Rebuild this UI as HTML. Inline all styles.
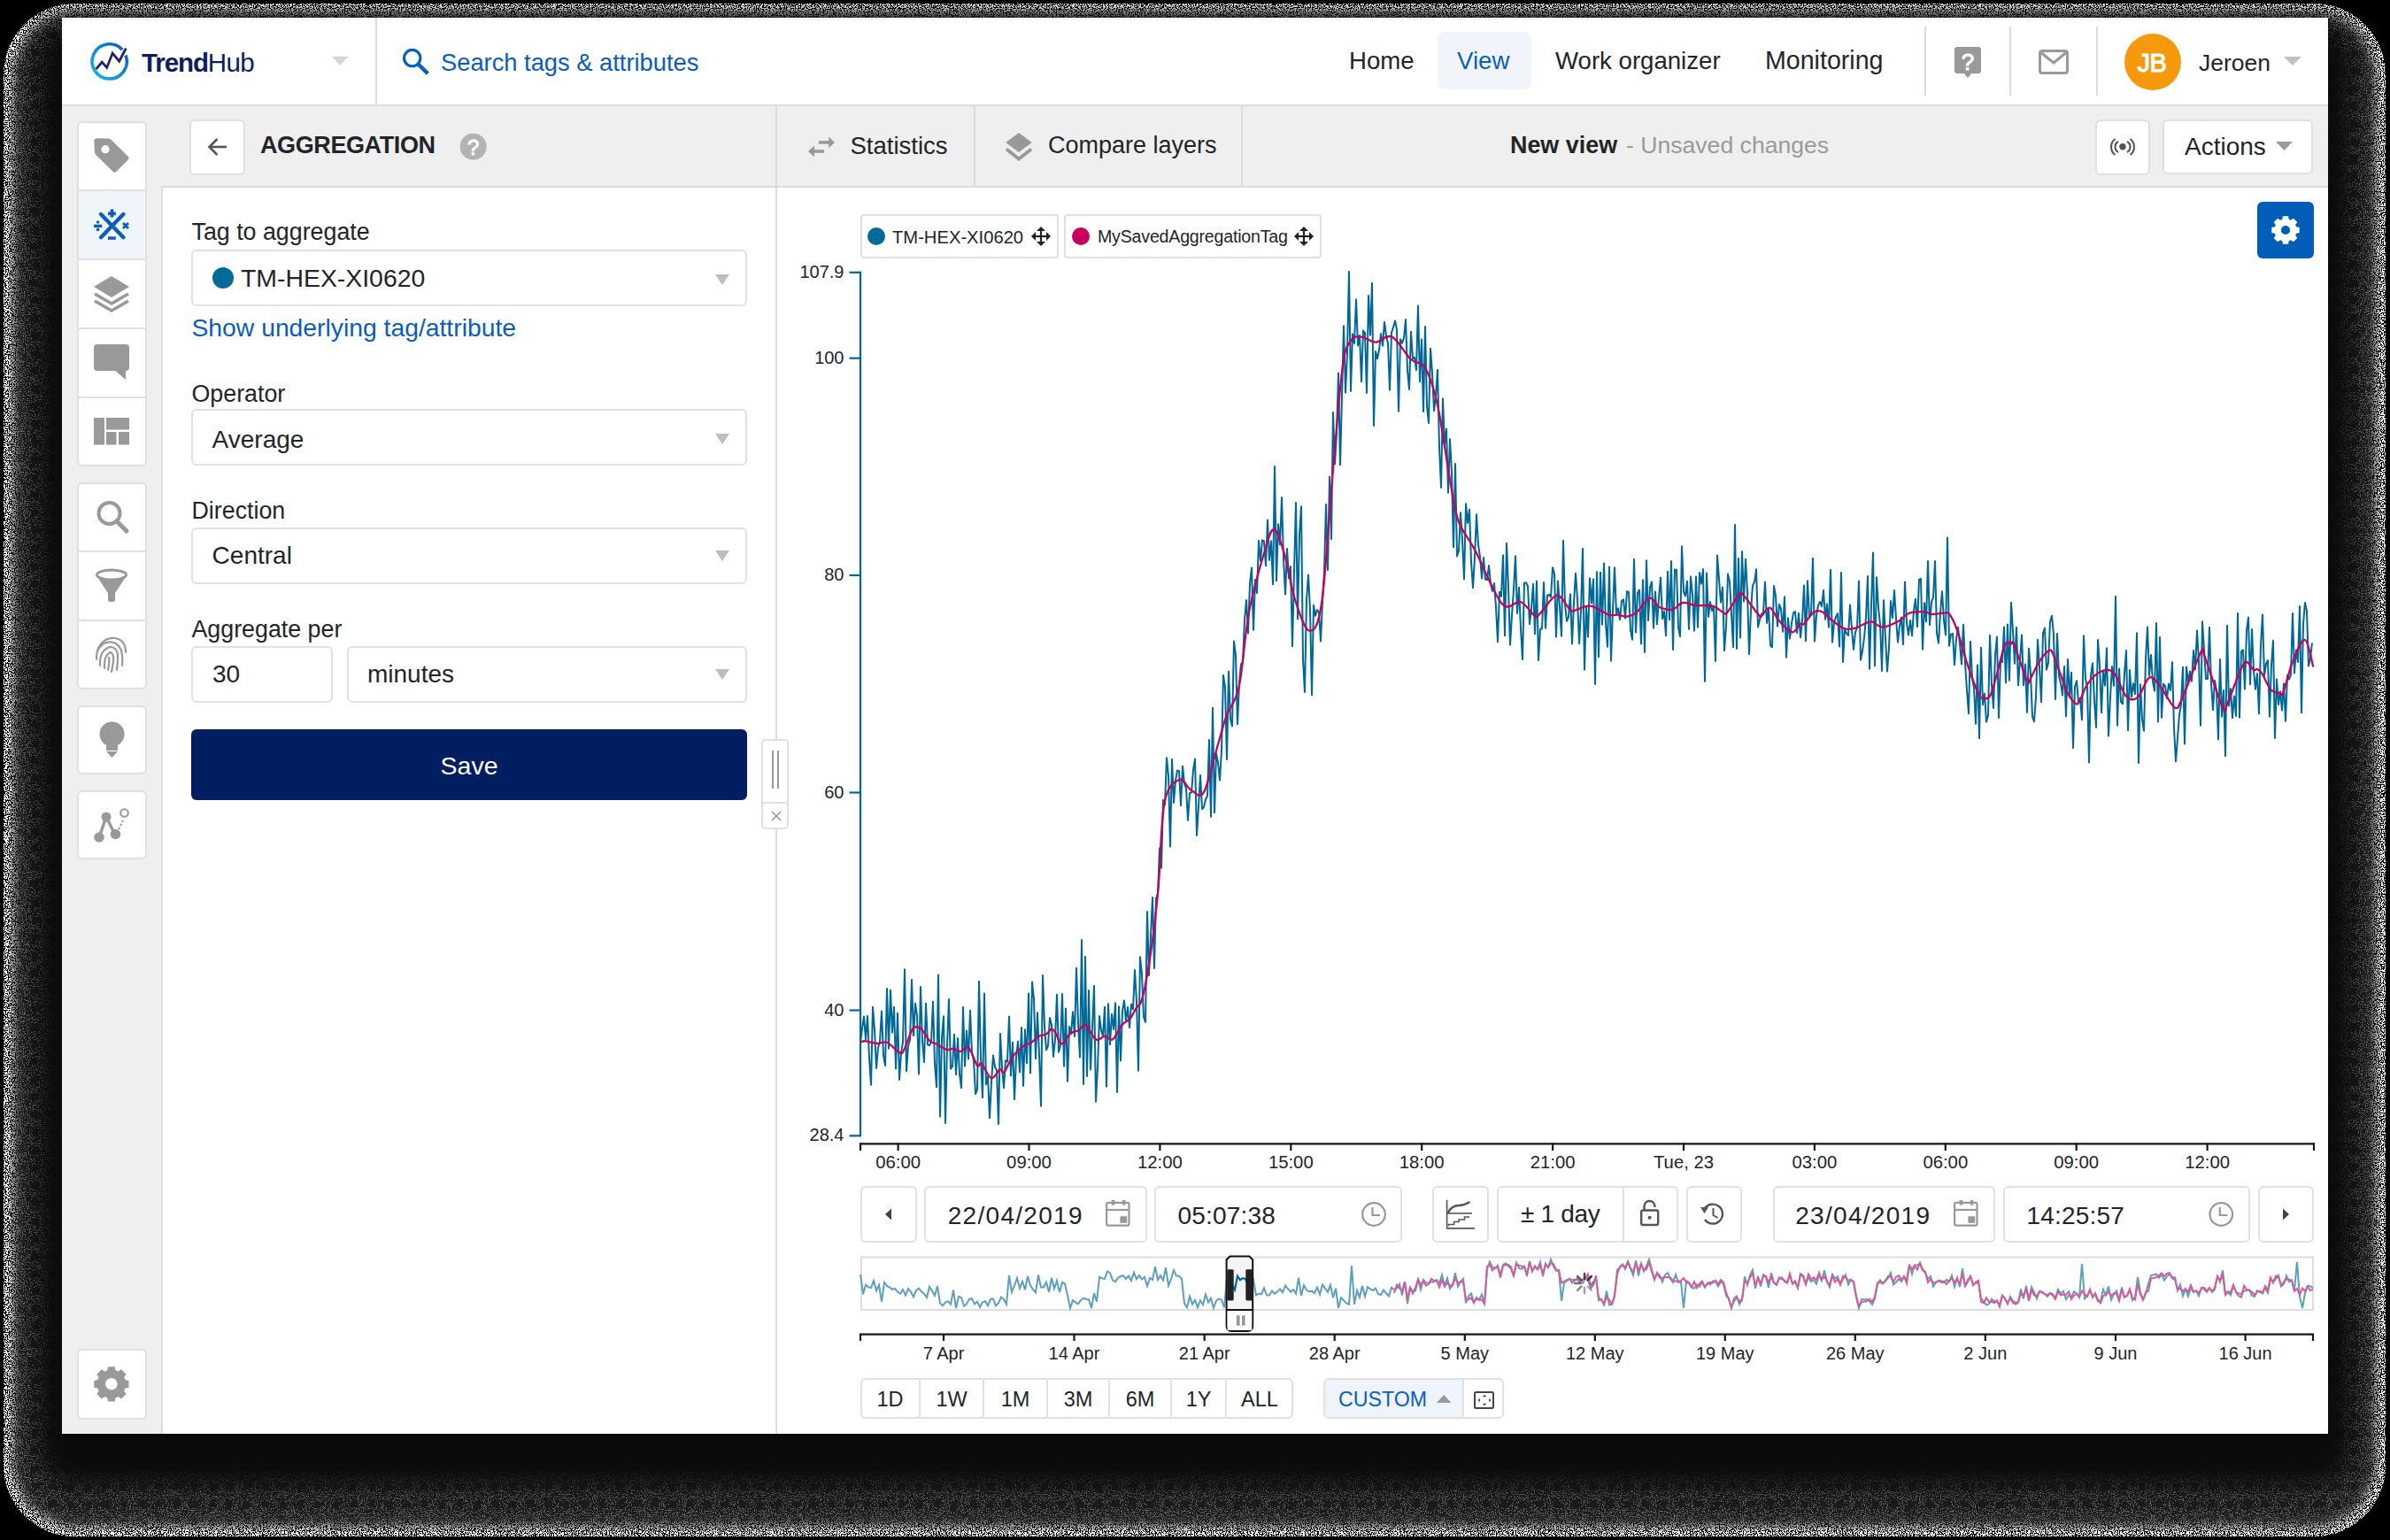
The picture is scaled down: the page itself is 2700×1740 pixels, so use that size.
<!DOCTYPE html>
<html><head><meta charset="utf-8"><title>TrendHub</title>
<style>
html,body{margin:0;padding:0;width:2700px;height:1740px;overflow:hidden;background:#000;}
body{position:relative;font-family:"Liberation Sans", sans-serif;}
div,svg{box-sizing:border-box;}
svg{overflow:visible;}
</style></head><body>
<div style="position:absolute;left:0;top:0;width:2700px;height:1740px;background:#000"></div><svg style="position:absolute;left:0;top:0" width="2700" height="1740">
<defs>
<filter id="nz" x="0" y="0" width="100%" height="100%" color-interpolation-filters="sRGB">
<feTurbulence type="fractalNoise" baseFrequency="0.75" numOctaves="1" seed="4" result="t"/>
<feColorMatrix type="matrix" values="0 0 0 0 0  0 0 0 0 0  0 0 0 0 0  1 0 0 0 0" in="t" result="a"/>
<feComponentTransfer in="a" result="b"><feFuncA type="discrete" tableValues="0 0 0 0 0 1 1 1 1 1"/></feComponentTransfer>
<feFlood flood-color="#fff" result="w"/>
<feComposite in="w" in2="b" operator="in" result="wn"/>
<feComposite in="wn" in2="SourceGraphic" operator="in"/>
</filter>
<radialGradient id="sh" cx="50%" cy="50%" r="50%"><stop offset="0" stop-color="#000"/><stop offset="1" stop-color="#000"/></radialGradient>
</defs>
<rect x="4" y="4" width="2691" height="1732" rx="80" ry="80" fill="#fff" filter="url(#nz)"/>
</svg><div style="position:absolute;left:17px;top:17px;width:2665px;height:1706px;border-radius:70px;background:#1c1c1c;filter:blur(6px)"></div><div style="position:absolute;left:40px;top:19px;width:2620px;height:1660px;border-radius:40px;background:#0b0b0b;filter:blur(14px)"></div><svg style="position:absolute;left:0;top:0" width="2700" height="1740">
<defs>
<filter id="nz2" x="0" y="0" width="100%" height="100%" color-interpolation-filters="sRGB">
<feTurbulence type="fractalNoise" baseFrequency="0.95" numOctaves="1" seed="11" result="t"/>
<feColorMatrix type="matrix" values="0 0 0 0 0  0 0 0 0 0  0 0 0 0 0  1 0 0 0 0" in="t" result="a"/>
<feComponentTransfer in="a" result="b"><feFuncA type="discrete" tableValues="0 0 0 0 0 0 1 1 1 1"/></feComponentTransfer>
<feFlood flood-color="#6a6a6a" result="w"/>
<feComposite in="w" in2="b" operator="in" result="wn"/>
<feComposite in="wn" in2="SourceGraphic" operator="in"/>
</filter>
<filter id="bl2" x="-5%" y="-5%" width="110%" height="110%"><feGaussianBlur stdDeviation="13"/></filter>
<mask id="m2" maskUnits="userSpaceOnUse" x="0" y="0" width="2700" height="1740">
<rect x="0" y="0" width="2700" height="1740" fill="black"/>
<rect x="10" y="10" width="2679" height="1720" rx="76" fill="white"/>
<rect x="44" y="30" width="2612" height="1650" rx="40" fill="black" filter="url(#bl2)"/>
</mask>
</defs>
<rect x="0" y="0" width="2700" height="1740" fill="#fff" filter="url(#nz2)" mask="url(#m2)"/>
</svg><div style="position:absolute;left:70px;top:20px;width:2560px;height:1600px;background:#fff;"></div><div style="position:absolute;left:70px;top:120px;width:113px;height:1500px;background:#efefef;"></div><div style="position:absolute;left:183px;top:120px;width:2447px;height:91px;background:#efefef;"></div><div style="position:absolute;left:70px;top:118px;width:2560px;height:2px;background:#dcdcdc;"></div><div style="position:absolute;left:183px;top:210px;width:2447px;height:2px;background:#dcdcdc;"></div><div style="position:absolute;left:182px;top:210px;width:2px;height:1410px;background:#dcdcdc;"></div><div style="position:absolute;left:876px;top:120px;width:2px;height:1500px;background:#dcdcdc;"></div><div style="position:absolute;left:424px;top:20px;width:2px;height:98px;background:#dcdcdc;"></div><svg style="position:absolute;left:95px;top:40px;" width="55" height="60" viewBox="95 40 55 60">
<defs><linearGradient id="lg" x1="0" y1="1" x2="1" y2="0"><stop offset="0" stop-color="#19b6ea"/><stop offset="1" stop-color="#0a58c0"/></linearGradient></defs>
<path d="M138.2,56.3 A19.6,19.6 0 1 0 142.0,62.5" fill="none" stroke="url(#lg)" stroke-width="3.6" stroke-linecap="butt"/>
<polyline points="108.5,78.1 115.2,70.1 120.7,76.4 127.1,60.1 134.7,69.2 142.3,54.7" fill="none" stroke="#25226a" stroke-width="2.8" stroke-linejoin="miter"/>
</svg><div style="position:absolute;left:160px;top:55.5px;font-size:29.5px;line-height:29.5px;color:#0e1d5e;font-weight:400;white-space:nowrap;"><span style="font-weight:700;letter-spacing:-1.1px">Trend</span><span style="letter-spacing:-0.6px">Hub</span></div><svg style="position:absolute;left:370px;top:60px;" width="30" height="18" viewBox="370 60 30 18"><polygon points="374.5,63.8 393.9,63.8 384.2,73.8" fill="#d6d6d6"/></svg><svg style="position:absolute;left:450px;top:50px;" width="40" height="40" viewBox="450 50 40 40"><circle cx="465.7" cy="65.6" r="9.2" fill="none" stroke="#0a5ec0" stroke-width="3.1"/><line x1="473" y1="73" x2="483.3" y2="83.1" stroke="#0a5ec0" stroke-width="4.4" stroke-linecap="butt"/></svg><div style="position:absolute;left:498px;top:57.1px;font-size:27.3px;line-height:27.3px;color:#0a5dbc;font-weight:400;white-space:nowrap;">Search tags &amp; attributes</div><div style="position:absolute;left:1624px;top:36px;width:106px;height:65px;background:#f1f5fa;border-radius:8px;"></div><div style="position:absolute;left:1524px;top:55.2px;font-size:27.6px;line-height:27.6px;color:#212529;font-weight:400;white-space:nowrap;">Home</div><div style="position:absolute;left:1646px;top:55.2px;font-size:27.6px;line-height:27.6px;color:#0a5ec0;font-weight:400;white-space:nowrap;">View</div><div style="position:absolute;left:1757px;top:55.2px;font-size:27.6px;line-height:27.6px;color:#212529;font-weight:400;white-space:nowrap;">Work organizer</div><div style="position:absolute;left:1994px;top:54.4px;font-size:28.6px;line-height:28.6px;color:#212529;font-weight:400;white-space:nowrap;">Monitoring</div><div style="position:absolute;left:2174px;top:30px;width:2px;height:78px;background:#dcdcdc;"></div><div style="position:absolute;left:2270px;top:30px;width:2px;height:78px;background:#dcdcdc;"></div><div style="position:absolute;left:2368px;top:30px;width:2px;height:78px;background:#dcdcdc;"></div><svg style="position:absolute;left:2204px;top:50px;" width="38" height="42" viewBox="2204 50 38 42"><rect x="2208" y="53" width="30" height="30" rx="3" fill="#999"/><polygon points="2218,82 2228,82 2223,88" fill="#999"/><text x="2223" y="78.5" font-family="Liberation Sans" font-weight="400" font-size="26" fill="#fff" stroke="#fff" stroke-width="0.9" text-anchor="middle">?</text></svg><svg style="position:absolute;left:2300px;top:52px;" width="41" height="36" viewBox="2300 52 41 36"><rect x="2304.5" y="57.5" width="31" height="25" rx="2.5" fill="none" stroke="#999" stroke-width="3"/><polyline points="2306,59.5 2320,71 2334,59.5" fill="none" stroke="#999" stroke-width="3"/></svg><svg style="position:absolute;left:2398px;top:36px;" width="68" height="68" viewBox="2398 36 68 68"><circle cx="2432" cy="70" r="32" fill="#f7990c"/><text x="2431" y="81" font-family="Liberation Sans" font-weight="400" font-size="29" fill="#fff" stroke="#fff" stroke-width="1.1" text-anchor="middle" letter-spacing="-0.5">JB</text></svg><div style="position:absolute;left:2484px;top:57.6px;font-size:26.5px;line-height:26.5px;color:#212529;font-weight:400;white-space:nowrap;">Jeroen</div><svg style="position:absolute;left:2576px;top:60px;" width="28" height="18" viewBox="2576 60 28 18"><polygon points="2580,64 2600,64 2590,74" fill="#c0c0c0"/></svg><div style="position:absolute;left:214px;top:135px;width:63px;height:62.5px;background:#fff;border:2px solid #e0e0e0;border-radius:6px;box-sizing:border-box;"></div><svg style="position:absolute;left:230px;top:150px;" width="32" height="32" viewBox="230 150 32 32"><line x1="237" y1="166" x2="256" y2="166" stroke="#555" stroke-width="2.6"/><polyline points="245.5,157 236.5,166 245.5,175" fill="none" stroke="#555" stroke-width="2.6"/></svg><div style="position:absolute;left:294px;top:151.1px;font-size:27px;line-height:27px;color:#212529;font-weight:700;white-space:nowrap;letter-spacing:-0.4px;">AGGREGATION</div><svg style="position:absolute;left:518px;top:149px;" width="34" height="34" viewBox="518 149 34 34"><circle cx="534.7" cy="165.7" r="15" fill="#b3b3b3"/><text x="534.7" y="174.5" font-family="Liberation Sans" font-weight="400" font-size="24" fill="#fff" stroke="#fff" stroke-width="0.9" text-anchor="middle">?</text></svg><div style="position:absolute;left:1100px;top:120px;width:2px;height:91px;background:#dcdcdc;"></div><div style="position:absolute;left:1402px;top:120px;width:2px;height:91px;background:#dcdcdc;"></div><svg style="position:absolute;left:908px;top:150px;" width="38" height="32" viewBox="908 150 38 32"><g stroke="#999" stroke-width="3.6" fill="none"><line x1="925" y1="160.9" x2="937.5" y2="160.9"/><line x1="918.5" y1="171" x2="931" y2="171"/></g><polygon points="936.2,154.6 943,160.9 936.2,167.2" fill="#999"/><polygon points="920,164.6 913,171 920,177.4" fill="#999"/></svg><div style="position:absolute;left:960.5px;top:150.7px;font-size:27.5px;line-height:27.5px;color:#212529;font-weight:400;white-space:nowrap;">Statistics</div><svg style="position:absolute;left:1132px;top:146px;" width="40" height="40" viewBox="1132 146 40 40"><polygon points="1151,150 1165.8,161 1151,172 1136.2,161" fill="#999"/><polyline points="1137,168.6 1151,179.6 1165,168.6" fill="none" stroke="#999" stroke-width="3.8"/></svg><div style="position:absolute;left:1184px;top:151.1px;font-size:27px;line-height:27px;color:#212529;font-weight:400;white-space:nowrap;">Compare layers</div><div style="position:absolute;left:1706px;top:150.7px;font-size:26.9px;line-height:26.9px;color:#212529;font-weight:700;white-space:nowrap;">New view</div><div style="position:absolute;left:1837px;top:151.0px;font-size:26.6px;line-height:26.6px;color:#9a9a9a;font-weight:400;white-space:nowrap;">- Unsaved changes</div><div style="position:absolute;left:2367px;top:134.5px;width:62px;height:63.0px;background:#fff;border:2px solid #e0e0e0;border-radius:6px;box-sizing:border-box;"></div><svg style="position:absolute;left:2380px;top:150px;" width="36" height="32" viewBox="2380 150 36 32"><circle cx="2398" cy="165.8" r="3.7" fill="#555"/><path d="M2393,160 A6.9,6.9 0 0 0 2393,172 M2403,160 A6.9,6.9 0 0 1 2403,172" fill="none" stroke="#555" stroke-width="2.1"/><path d="M2389.5,157 A11.25,11.25 0 0 0 2389.5,175 M2406.5,157 A11.25,11.25 0 0 1 2406.5,175" fill="none" stroke="#555" stroke-width="2.1"/></svg><div style="position:absolute;left:2443px;top:135px;width:170px;height:62px;background:#fff;border:2px solid #e0e0e0;border-radius:6px;box-sizing:border-box;"></div><div style="position:absolute;left:2468px;top:151.6px;font-size:28px;line-height:28px;color:#212529;font-weight:400;white-space:nowrap;">Actions</div><svg style="position:absolute;left:2568px;top:156px;" width="26" height="18" viewBox="2568 156 26 18"><polygon points="2571,160 2590,160 2580.5,170" fill="#9a9a9a"/></svg><div style="position:absolute;left:87px;top:137px;width:79px;height:390px;background:#fff;border:2px solid #e0e0e0;border-radius:6px;box-sizing:border-box;"></div><div style="position:absolute;left:88px;top:214px;width:77px;height:2px;background:#e0e0e0;"></div><div style="position:absolute;left:88px;top:292px;width:77px;height:2px;background:#e0e0e0;"></div><div style="position:absolute;left:88px;top:370px;width:77px;height:2px;background:#e0e0e0;"></div><div style="position:absolute;left:88px;top:448px;width:77px;height:2px;background:#e0e0e0;"></div><div style="position:absolute;left:89px;top:216px;width:75px;height:76px;background:#f0f5fa;"></div><svg style="position:absolute;left:100px;top:150px;" width="52" height="52" viewBox="100 150 52 52"><path d="M106.3,160 Q106.3,156.3 110,156.3 L122.5,156.6 Q124.5,156.7 126,158.2 L144.5,176.5 Q146.5,178.7 144.5,180.8 L131.5,193.8 Q129.5,195.8 127.5,193.8 L108.8,175.5 Q107,173.7 107,171.5 Z" fill="#999"/><circle cx="119" cy="168.7" r="4.6" fill="#fff"/></svg><svg style="position:absolute;left:100px;top:228px;" width="52" height="50" viewBox="100 228 52 50"><g stroke="#0a5ec0" stroke-linecap="round"><line x1="114" y1="242" x2="139.4" y2="268.2" stroke-width="4.3"/><line x1="139.4" y1="242" x2="114" y2="268.2" stroke-width="4.3"/></g><g fill="#0a5ec0"><rect x="122" y="239.5" width="8.8" height="3.7"/><rect x="124.6" y="236.4" width="3.7" height="9.2"/><rect x="122" y="267.3" width="8.8" height="3.5"/><rect x="106" y="253.7" width="9.3" height="3.4"/><circle cx="110.6" cy="251" r="1.8"/><circle cx="110.6" cy="259.4" r="1.8"/></g><g stroke="#0a5ec0" stroke-width="2.8"><line x1="139" y1="252" x2="145" y2="258"/><line x1="145" y1="252" x2="139" y2="258"/></g></svg><svg style="position:absolute;left:100px;top:305px;" width="52" height="53" viewBox="100 305 52 53"><polygon points="126,312 146,324 126,336 106,324" fill="#999"/><polyline points="107,332 126,343 145,332" fill="none" stroke="#999" stroke-width="3.5"/><polyline points="107,340 126,351 145,340" fill="none" stroke="#999" stroke-width="3.5"/></svg><svg style="position:absolute;left:100px;top:385px;" width="52" height="47" viewBox="100 385 52 47"><rect x="106" y="389" width="40" height="30" rx="4" fill="#999"/><polygon points="128,417 142,417 142,429" fill="#999"/></svg><svg style="position:absolute;left:100px;top:466px;" width="52" height="42" viewBox="100 466 52 42"><rect x="106" y="472" width="12" height="30.5" fill="#999"/><rect x="120" y="472" width="26" height="13.5" fill="#999"/><rect x="120" y="488" width="11.5" height="14.5" fill="#999"/><rect x="134" y="488" width="12" height="14.5" fill="#999"/></svg><div style="position:absolute;left:87px;top:545px;width:79px;height:234px;background:#fff;border:2px solid #e0e0e0;border-radius:6px;box-sizing:border-box;"></div><div style="position:absolute;left:88px;top:621.5px;width:77px;height:2.0px;background:#e0e0e0;"></div><div style="position:absolute;left:88px;top:700px;width:77px;height:2px;background:#e0e0e0;"></div><svg style="position:absolute;left:100px;top:555px;" width="52" height="55" viewBox="100 555 52 55"><circle cx="123.5" cy="580" r="12" fill="none" stroke="#999" stroke-width="4"/><line x1="132" y1="589" x2="143" y2="600" stroke="#999" stroke-width="5" stroke-linecap="round"/></svg><svg style="position:absolute;left:100px;top:636px;" width="52" height="54" viewBox="100 636 52 54"><ellipse cx="126" cy="649.5" rx="16.5" ry="5.5" fill="none" stroke="#999" stroke-width="3"/><path d="M109.5,650 Q111,654 122,670 L122,678 Q122,680 124,680 L128,680 Q130,680 130,678 L130,670 Q141,654 142.5,650 Q135,656 126,656 Q117,656 109.5,650 Z" fill="#999"/></svg><svg style="position:absolute;left:100px;top:712px;" width="52" height="56" viewBox="100 712 52 56"><g fill="none" stroke="#999" stroke-width="2.2" stroke-linecap="round"><path d="M110,735 Q116,720 130,721 Q142,723 142,737"/><path d="M109,745 Q108,731 120,726 Q132,723 137,735 Q139,742 138,752"/><path d="M113,752 Q112,735 124,731 Q134,731 133,745 L132,757"/><path d="M118,755 Q117,740 125,737 Q129,739 128,748 L126,759"/><path d="M122,757 Q124,748 123,743"/></g></svg><div style="position:absolute;left:87px;top:797px;width:79px;height:78px;background:#fff;border:2px solid #e0e0e0;border-radius:6px;box-sizing:border-box;"></div><svg style="position:absolute;left:100px;top:805px;" width="52" height="63" viewBox="100 805 52 63"><circle cx="126.5" cy="829.5" r="14" fill="#999"/><rect x="120" y="839" width="13" height="9" fill="#999"/><polygon points="120,849 133,849 126.5,856" fill="#999"/></svg><div style="position:absolute;left:87px;top:893px;width:79px;height:78px;background:#fff;border:2px solid #e0e0e0;border-radius:6px;box-sizing:border-box;"></div><svg style="position:absolute;left:100px;top:900px;" width="52" height="65" viewBox="100 900 52 65"><line x1="120" y1="923" x2="112" y2="946" stroke="#999" stroke-width="3.5"/><line x1="120" y1="923" x2="130" y2="943" stroke="#999" stroke-width="3.5"/><circle cx="120" cy="923" r="5.5" fill="#999"/><circle cx="112" cy="946" r="5.8" fill="#999"/><circle cx="130.5" cy="942.5" r="5.8" fill="#999"/><line x1="134" y1="937" x2="139" y2="927" stroke="#999" stroke-width="2" stroke-dasharray="2.5,2"/><circle cx="140.5" cy="918.5" r="4.3" fill="none" stroke="#999" stroke-width="2"/></svg><div style="position:absolute;left:87px;top:1524px;width:79px;height:80px;background:#fff;border:2px solid #e0e0e0;border-radius:6px;box-sizing:border-box;"></div><svg style="position:absolute;left:100px;top:1538px;" width="52" height="52" viewBox="100 1538 52 52"><path fill="#999" d="M121.22,1548.29 L122.02,1544.18 L129.78,1544.18 L130.58,1548.29 L131.35,1548.54 L132.10,1548.83 L132.84,1549.16 L133.56,1549.52 L137.03,1547.19 L142.51,1552.67 L140.18,1556.14 L140.54,1556.86 L140.87,1557.60 L141.16,1558.35 L141.41,1559.12 L145.52,1559.92 L145.52,1567.68 L141.41,1568.48 L141.16,1569.25 L140.87,1570.00 L140.54,1570.74 L140.18,1571.46 L142.51,1574.93 L137.03,1580.41 L133.56,1578.08 L132.84,1578.44 L132.10,1578.77 L131.35,1579.06 L130.58,1579.31 L129.78,1583.42 L122.02,1583.42 L121.22,1579.31 L120.45,1579.06 L119.70,1578.77 L118.96,1578.44 L118.24,1578.08 L114.77,1580.41 L109.29,1574.93 L111.62,1571.46 L111.26,1570.74 L110.93,1570.00 L110.64,1569.25 L110.39,1568.48 L106.28,1567.68 L106.28,1559.92 L110.39,1559.12 L110.64,1558.35 L110.93,1557.60 L111.26,1556.86 L111.62,1556.14 L109.29,1552.67 L114.77,1547.19 L118.24,1549.52 L118.96,1549.16 L119.70,1548.83 L120.45,1548.54 Z"/><circle cx="125.9" cy="1563.8" r="6.8" fill="#fff"/></svg><div style="position:absolute;left:216.5px;top:249.3px;font-size:26.8px;line-height:26.8px;color:#212529;font-weight:400;white-space:nowrap;">Tag to aggregate</div><div style="position:absolute;left:216px;top:282px;width:628px;height:64px;background:#fff;border:2px solid #e0e0e0;border-radius:6px;box-sizing:border-box;"></div><svg style="position:absolute;left:238px;top:300px;" width="28" height="28" viewBox="238 300 28 28"><circle cx="252" cy="314" r="12" fill="#006a98"/></svg><div style="position:absolute;left:272px;top:299.8px;font-size:28.4px;line-height:28.4px;color:#212529;font-weight:400;white-space:nowrap;">TM-HEX-XI0620</div><svg style="position:absolute;left:806px;top:308px;" width="20" height="16" viewBox="806 308 20 16"><polygon points="808,310 824,310 816,322" fill="#bdbdbd"/></svg><div style="position:absolute;left:216.5px;top:355.5px;font-size:28.3px;line-height:28.3px;color:#0a5dbc;font-weight:400;white-space:nowrap;">Show underlying tag/attribute</div><div style="position:absolute;left:216.5px;top:432.1px;font-size:26.8px;line-height:26.8px;color:#212529;font-weight:400;white-space:nowrap;">Operator</div><div style="position:absolute;left:216px;top:462px;width:628px;height:64px;background:#fff;border:2px solid #e0e0e0;border-radius:6px;box-sizing:border-box;"></div><div style="position:absolute;left:239.6px;top:482.8px;font-size:28px;line-height:28px;color:#212529;font-weight:400;white-space:nowrap;">Average</div><svg style="position:absolute;left:806px;top:488px;" width="20" height="16" viewBox="806 488 20 16"><polygon points="808,490 824,490 816,502" fill="#bdbdbd"/></svg><div style="position:absolute;left:216.5px;top:564.1px;font-size:26.8px;line-height:26.8px;color:#212529;font-weight:400;white-space:nowrap;">Direction</div><div style="position:absolute;left:216px;top:596px;width:628px;height:64px;background:#fff;border:2px solid #e0e0e0;border-radius:6px;box-sizing:border-box;"></div><div style="position:absolute;left:239.6px;top:614.3px;font-size:28px;line-height:28px;color:#212529;font-weight:400;white-space:nowrap;">Central</div><svg style="position:absolute;left:806px;top:620px;" width="20" height="16" viewBox="806 620 20 16"><polygon points="808,622 824,622 816,634" fill="#bdbdbd"/></svg><div style="position:absolute;left:216.5px;top:698.1px;font-size:26.8px;line-height:26.8px;color:#212529;font-weight:400;white-space:nowrap;">Aggregate per</div><div style="position:absolute;left:216px;top:730px;width:160px;height:64px;background:#fff;border:2px solid #e0e0e0;border-radius:6px;box-sizing:border-box;"></div><div style="position:absolute;left:240px;top:748.3px;font-size:28px;line-height:28px;color:#212529;font-weight:400;white-space:nowrap;">30</div><div style="position:absolute;left:392px;top:730px;width:452px;height:64px;background:#fff;border:2px solid #e0e0e0;border-radius:6px;box-sizing:border-box;"></div><div style="position:absolute;left:415px;top:748.3px;font-size:28px;line-height:28px;color:#212529;font-weight:400;white-space:nowrap;">minutes</div><svg style="position:absolute;left:806px;top:754px;" width="20" height="16" viewBox="806 754 20 16"><polygon points="808,756 824,756 816,768" fill="#bdbdbd"/></svg><div style="position:absolute;left:216px;top:823.5px;width:628px;height:80.5px;background:#001e60;border-radius:6px;"></div><div style="position:absolute;left:30px;width:1000px;text-align:center;top:850.9px;font-size:28.5px;line-height:28.5px;color:#fff;font-weight:400;white-space:nowrap;">Save</div><div style="position:absolute;left:860px;top:835px;width:31px;height:102px;background:#fff;border:2px solid #e0e0e0;border-radius:5px;box-sizing:border-box;"></div><div style="position:absolute;left:861px;top:906px;width:29px;height:2px;background:#e0e0e0;"></div><div style="position:absolute;left:872px;top:848px;width:2px;height:43px;background:#999;"></div><div style="position:absolute;left:878px;top:848px;width:2px;height:43px;background:#999;"></div><svg style="position:absolute;left:869px;top:914px;" width="16" height="16" viewBox="869 914 16 16"><g stroke="#999" stroke-width="1.6"><line x1="872" y1="917" x2="882" y2="927"/><line x1="882" y1="917" x2="872" y2="927"/></g></svg><div style="position:absolute;left:2550px;top:228px;width:64px;height:64px;background:#005db8;border-radius:6px;"></div><svg style="position:absolute;left:2560px;top:238px;" width="44" height="44" viewBox="2560 238 44 44"><path fill="#fff" d="M2578.26,247.97 L2578.92,244.30 L2585.08,244.30 L2585.74,247.97 L2586.29,248.15 L2586.82,248.36 L2587.35,248.59 L2587.86,248.85 L2590.92,246.72 L2595.28,251.08 L2593.15,254.14 L2593.41,254.65 L2593.64,255.18 L2593.85,255.71 L2594.03,256.26 L2597.70,256.92 L2597.70,263.08 L2594.03,263.74 L2593.85,264.29 L2593.64,264.82 L2593.41,265.35 L2593.15,265.86 L2595.28,268.92 L2590.92,273.28 L2587.86,271.15 L2587.35,271.41 L2586.82,271.64 L2586.29,271.85 L2585.74,272.03 L2585.08,275.70 L2578.92,275.70 L2578.26,272.03 L2577.71,271.85 L2577.18,271.64 L2576.65,271.41 L2576.14,271.15 L2573.08,273.28 L2568.72,268.92 L2570.85,265.86 L2570.59,265.35 L2570.36,264.82 L2570.15,264.29 L2569.97,263.74 L2566.30,263.08 L2566.30,256.92 L2569.97,256.26 L2570.15,255.71 L2570.36,255.18 L2570.59,254.65 L2570.85,254.14 L2568.72,251.08 L2573.08,246.72 L2576.14,248.85 L2576.65,248.59 L2577.18,248.36 L2577.71,248.15 Z"/><circle cx="2582" cy="260" r="5.1" fill="#005db8"/></svg><div style="position:absolute;left:972px;top:242px;width:224px;height:50px;background:#fff;border:2px solid #e0e0e0;border-radius:4px;box-sizing:border-box;"></div><svg style="position:absolute;left:976px;top:253px;" width="28" height="28" viewBox="976 253 28 28"><circle cx="990" cy="267" r="10" fill="#006a98"/></svg><div style="position:absolute;left:1008px;top:257.5px;font-size:20.2px;line-height:20.2px;color:#212529;font-weight:400;white-space:nowrap;">TM-HEX-XI0620</div><svg style="position:absolute;left:1162px;top:253px;" width="28" height="28" viewBox="1162 253 28 28"><g stroke="#222" stroke-width="2.2"><line x1="1167" y1="267" x2="1185" y2="267"/><line x1="1176" y1="258" x2="1176" y2="276"/></g><g fill="#222"><polygon points="1165,267 1170,262 1170,272"/><polygon points="1187,267 1182,262 1182,272"/><polygon points="1176,256 1171,261 1181,261"/><polygon points="1176,278 1171,273 1181,273"/></g></svg><div style="position:absolute;left:1202px;top:242px;width:291px;height:50px;background:#fff;border:2px solid #e0e0e0;border-radius:4px;box-sizing:border-box;"></div><svg style="position:absolute;left:1207px;top:253px;" width="28" height="28" viewBox="1207 253 28 28"><circle cx="1221" cy="267" r="10" fill="#c7005e"/></svg><div style="position:absolute;left:1240px;top:258.0px;font-size:19.6px;line-height:19.6px;color:#212529;font-weight:400;white-space:nowrap;letter-spacing:-0.2px;">MySavedAggregationTag</div><svg style="position:absolute;left:1459px;top:253px;" width="28" height="28" viewBox="1459 253 28 28"><g stroke="#222" stroke-width="2.2"><line x1="1464" y1="267" x2="1482" y2="267"/><line x1="1473" y1="258" x2="1473" y2="276"/></g><g fill="#222"><polygon points="1462,267 1467,262 1467,272"/><polygon points="1484,267 1479,262 1479,272"/><polygon points="1473,256 1468,261 1478,261"/><polygon points="1473,278 1468,273 1478,273"/></g></svg><svg style="position:absolute;left:877px;top:212px;" width="1753" height="1118" viewBox="877 212 1753 1118"><g fill="none" stroke-linejoin="round"><path d="M972.0,1177.3 974.0,1162.0 976.0,1148.5 978.0,1174.4 980.0,1147.9 982.0,1195.8 984.0,1225.8 986.0,1137.8 988.0,1163.8 990.0,1207.0 992.0,1183.9 994.0,1176.6 996.0,1142.5 998.0,1192.5 1000.0,1203.9 1002.0,1116.9 1004.0,1184.7 1006.0,1118.8 1008.0,1166.6 1010.0,1137.9 1012.0,1207.5 1014.0,1144.8 1016.0,1219.9 1018.0,1189.6 1020.0,1177.5 1022.0,1095.3 1024.0,1210.2 1026.0,1181.9 1028.0,1174.9 1030.0,1107.1 1032.0,1170.1 1034.0,1133.7 1036.0,1147.5 1038.0,1213.5 1040.0,1115.1 1042.0,1176.3 1044.0,1199.9 1046.0,1133.8 1048.0,1180.4 1050.0,1181.3 1052.0,1177.4 1054.0,1131.8 1056.0,1201.7 1058.0,1228.2 1060.0,1101.5 1062.0,1261.6 1064.0,1173.0 1066.0,1148.2 1068.0,1268.9 1070.0,1180.9 1072.0,1129.1 1074.0,1207.8 1076.0,1204.8 1078.0,1168.7 1080.0,1214.1 1082.0,1173.1 1084.0,1213.3 1086.0,1229.2 1088.0,1138.1 1090.0,1204.4 1092.0,1164.6 1094.0,1196.5 1096.0,1141.7 1098.0,1189.8 1100.0,1198.0 1102.0,1236.0 1104.0,1231.2 1106.0,1108.7 1108.0,1194.9 1110.0,1240.1 1112.0,1122.5 1114.0,1225.2 1116.0,1216.5 1118.0,1263.2 1120.0,1222.5 1122.0,1192.6 1124.0,1205.9 1126.0,1208.9 1128.0,1270.0 1130.0,1168.0 1132.0,1205.9 1134.0,1229.1 1136.0,1198.2 1138.0,1199.6 1140.0,1148.6 1142.0,1215.5 1144.0,1177.8 1146.0,1242.1 1148.0,1194.9 1150.0,1176.6 1152.0,1211.4 1154.0,1161.1 1156.0,1226.9 1158.0,1163.3 1160.0,1201.3 1162.0,1122.4 1164.0,1212.6 1166.0,1109.4 1168.0,1128.7 1170.0,1196.3 1172.0,1144.3 1174.0,1191.6 1176.0,1249.7 1178.0,1102.0 1180.0,1159.9 1182.0,1186.3 1184.0,1181.3 1186.0,1150.0 1188.0,1158.1 1190.0,1193.9 1192.0,1174.3 1194.0,1123.7 1196.0,1188.7 1198.0,1180.9 1200.0,1123.1 1202.0,1204.7 1204.0,1139.6 1206.0,1221.7 1208.0,1160.1 1210.0,1167.9 1212.0,1143.3 1214.0,1170.9 1216.0,1093.7 1218.0,1156.1 1220.0,1194.6 1222.0,1062.0 1224.0,1225.0 1226.0,1081.1 1228.0,1216.0 1230.0,1119.1 1232.0,1208.4 1234.0,1161.0 1236.0,1113.8 1238.0,1244.8 1240.0,1206.3 1242.0,1147.9 1244.0,1164.1 1246.0,1170.6 1248.0,1137.8 1250.0,1227.8 1252.0,1134.2 1254.0,1180.2 1256.0,1145.7 1258.0,1163.0 1260.0,1133.3 1262.0,1233.9 1264.0,1137.2 1266.0,1198.5 1268.0,1142.2 1270.0,1130.4 1272.0,1154.0 1274.0,1137.9 1276.0,1161.0 1278.0,1134.7 1280.0,1140.3 1282.0,1096.1 1284.0,1131.7 1286.0,1209.8 1288.0,1081.3 1290.0,1100.9 1292.0,1148.9 1294.0,1154.9 1296.0,1029.9 1298.0,1102.0 1300.0,1057.1 1302.0,1014.1 1304.0,1093.9 1306.0,1015.1 1308.0,1010.1 1310.0,958.3 1312.0,980.7 1314.0,903.9 1316.0,909.1 1318.0,856.2 1320.0,876.8 1322.0,956.6 1324.0,858.1 1326.0,906.9 1328.0,882.0 1330.0,870.5 1332.0,871.1 1334.0,910.1 1336.0,865.8 1338.0,885.6 1340.0,890.7 1342.0,926.8 1344.0,896.1 1346.0,895.4 1348.0,869.8 1350.0,857.6 1352.0,944.0 1354.0,911.3 1356.0,876.1 1358.0,914.0 1360.0,912.1 1362.0,903.5 1364.0,899.0 1366.0,835.9 1368.0,922.8 1370.0,799.8 1372.0,918.0 1374.0,851.1 1376.0,861.8 1378.0,881.6 1380.0,847.8 1382.0,762.9 1384.0,776.5 1386.0,857.9 1388.0,758.8 1390.0,812.5 1392.0,820.6 1394.0,724.5 1396.0,740.7 1398.0,818.3 1400.0,771.3 1402.0,750.2 1404.0,748.5 1406.0,700.9 1408.0,678.0 1410.0,715.5 1412.0,659.1 1414.0,641.4 1416.0,711.7 1418.0,654.9 1420.0,670.1 1422.0,611.0 1424.0,633.7 1426.0,610.3 1428.0,611.3 1430.0,639.3 1432.0,587.6 1434.0,633.0 1436.0,611.2 1438.0,660.2 1440.0,526.9 1442.0,656.2 1444.0,592.2 1446.0,615.3 1448.0,561.9 1450.0,631.6 1452.0,671.5 1454.0,620.0 1456.0,653.1 1458.0,640.0 1460.0,730.3 1462.0,645.7 1464.0,568.0 1466.0,699.4 1468.0,604.0 1470.0,572.2 1472.0,744.9 1474.0,781.9 1476.0,677.8 1478.0,649.5 1480.0,689.3 1482.0,785.3 1484.0,683.8 1486.0,695.7 1488.0,689.1 1490.0,691.7 1492.0,724.4 1494.0,680.0 1496.0,645.4 1498.0,569.9 1500.0,644.1 1502.0,538.5 1504.0,609.1 1506.0,465.9 1508.0,524.3 1510.0,489.3 1512.0,421.5 1514.0,525.2 1516.0,447.3 1518.0,368.2 1520.0,443.6 1522.0,399.3 1524.0,307.0 1526.0,441.9 1528.0,377.3 1530.0,387.9 1532.0,338.3 1534.0,390.5 1536.0,378.9 1538.0,431.3 1540.0,373.5 1542.0,376.0 1544.0,444.0 1546.0,334.1 1548.0,378.8 1550.0,319.7 1552.0,481.0 1554.0,396.9 1556.0,405.2 1558.0,395.5 1560.0,377.1 1562.0,390.6 1564.0,363.9 1566.0,379.2 1568.0,387.9 1570.0,440.8 1572.0,375.9 1574.0,369.9 1576.0,362.5 1578.0,372.1 1580.0,464.7 1582.0,383.2 1584.0,387.8 1586.0,381.6 1588.0,361.0 1590.0,418.7 1592.0,439.9 1594.0,374.8 1596.0,405.3 1598.0,403.8 1600.0,418.0 1602.0,345.4 1604.0,431.2 1606.0,383.4 1608.0,465.0 1610.0,369.0 1612.0,458.4 1614.0,478.0 1616.0,393.8 1618.0,421.3 1620.0,464.1 1622.0,448.2 1624.0,418.1 1626.0,505.5 1628.0,551.0 1630.0,450.5 1632.0,502.7 1634.0,484.5 1636.0,556.8 1638.0,496.2 1640.0,534.3 1642.0,618.2 1644.0,523.9 1646.0,628.4 1648.0,622.5 1650.0,579.3 1652.0,610.3 1654.0,654.2 1656.0,569.2 1658.0,590.9 1660.0,575.8 1662.0,634.7 1664.0,664.1 1666.0,630.4 1668.0,581.2 1670.0,615.2 1672.0,629.1 1674.0,653.5 1676.0,630.1 1678.0,654.6 1680.0,655.2 1682.0,639.0 1684.0,659.8 1686.0,667.9 1688.0,659.1 1690.0,685.9 1692.0,725.1 1694.0,668.7 1696.0,673.9 1698.0,627.3 1700.0,718.3 1702.0,613.8 1704.0,664.3 1706.0,728.6 1708.0,695.3 1710.0,665.8 1712.0,628.2 1714.0,693.0 1716.0,663.8 1718.0,710.3 1720.0,745.1 1722.0,658.7 1724.0,658.2 1726.0,662.0 1728.0,705.1 1730.0,687.2 1732.0,659.9 1734.0,716.2 1736.0,656.6 1738.0,746.0 1740.0,710.9 1742.0,710.2 1744.0,658.0 1746.0,709.7 1748.0,672.8 1750.0,671.7 1752.0,674.8 1754.0,641.3 1756.0,648.3 1758.0,719.6 1760.0,656.5 1762.0,685.9 1764.0,718.8 1766.0,610.9 1768.0,682.6 1770.0,701.8 1772.0,697.1 1774.0,671.2 1776.0,727.5 1778.0,681.6 1780.0,647.7 1782.0,676.6 1784.0,727.3 1786.0,690.9 1788.0,619.9 1790.0,756.7 1792.0,685.6 1794.0,719.6 1796.0,653.2 1798.0,681.4 1800.0,654.6 1802.0,773.1 1804.0,646.2 1806.0,742.3 1808.0,646.7 1810.0,705.6 1812.0,636.4 1814.0,704.7 1816.0,730.8 1818.0,640.6 1820.0,746.8 1822.0,690.0 1824.0,641.2 1826.0,693.6 1828.0,687.2 1830.0,700.1 1832.0,679.1 1834.0,677.3 1836.0,698.6 1838.0,668.0 1840.0,669.2 1842.0,711.7 1844.0,722.8 1846.0,631.7 1848.0,714.4 1850.0,669.9 1852.0,666.6 1854.0,727.5 1856.0,655.2 1858.0,737.0 1860.0,633.2 1862.0,700.9 1864.0,663.6 1866.0,657.4 1868.0,709.7 1870.0,668.6 1872.0,705.3 1874.0,675.5 1876.0,652.4 1878.0,699.3 1880.0,690.8 1882.0,718.1 1884.0,645.7 1886.0,700.2 1888.0,634.1 1890.0,733.9 1892.0,643.6 1894.0,643.9 1896.0,708.6 1898.0,719.2 1900.0,617.2 1902.0,668.4 1904.0,673.5 1906.0,656.7 1908.0,710.7 1910.0,651.6 1912.0,671.8 1914.0,712.6 1916.0,651.5 1918.0,708.7 1920.0,646.9 1922.0,659.5 1924.0,643.1 1926.0,770.0 1928.0,647.5 1930.0,696.8 1932.0,680.0 1934.0,690.1 1936.0,684.8 1938.0,746.9 1940.0,627.4 1942.0,654.4 1944.0,680.5 1946.0,663.6 1948.0,735.2 1950.0,707.5 1952.0,648.5 1954.0,657.4 1956.0,693.5 1958.0,731.3 1960.0,592.9 1962.0,733.0 1964.0,630.9 1966.0,720.4 1968.0,623.1 1970.0,679.4 1972.0,631.7 1974.0,668.7 1976.0,739.0 1978.0,689.7 1980.0,661.4 1982.0,657.8 1984.0,643.3 1986.0,708.5 1988.0,700.0 1990.0,693.8 1992.0,692.2 1994.0,657.6 1996.0,704.0 1998.0,687.8 2000.0,729.2 2002.0,731.3 2004.0,661.9 2006.0,673.4 2008.0,707.6 2010.0,682.9 2012.0,688.2 2014.0,713.7 2016.0,674.3 2018.0,742.8 2020.0,698.3 2022.0,721.5 2024.0,704.4 2026.0,692.3 2028.0,691.1 2030.0,715.0 2032.0,692.9 2034.0,720.3 2036.0,701.5 2038.0,661.6 2040.0,724.2 2042.0,656.3 2044.0,697.3 2046.0,694.6 2048.0,630.8 2050.0,724.5 2052.0,695.1 2054.0,684.2 2056.0,679.9 2058.0,685.2 2060.0,666.9 2062.0,699.8 2064.0,682.4 2066.0,708.7 2068.0,643.8 2070.0,725.6 2072.0,703.4 2074.0,697.1 2076.0,693.1 2078.0,730.4 2080.0,646.9 2082.0,747.9 2084.0,711.1 2086.0,715.5 2088.0,718.0 2090.0,683.5 2092.0,710.9 2094.0,733.8 2096.0,714.1 2098.0,709.1 2100.0,656.5 2102.0,745.8 2104.0,735.6 2106.0,720.7 2108.0,697.6 2110.0,650.9 2112.0,755.7 2114.0,684.3 2116.0,624.5 2118.0,752.5 2120.0,652.2 2122.0,686.3 2124.0,705.5 2126.0,757.9 2128.0,678.2 2130.0,721.5 2132.0,758.6 2134.0,731.7 2136.0,679.0 2138.0,698.2 2140.0,666.9 2142.0,698.8 2144.0,725.6 2146.0,707.7 2148.0,697.5 2150.0,728.2 2152.0,657.5 2154.0,704.1 2156.0,717.4 2158.0,701.0 2160.0,718.4 2162.0,689.8 2164.0,676.7 2166.0,708.1 2168.0,654.8 2170.0,653.9 2172.0,733.6 2174.0,681.3 2176.0,702.3 2178.0,634.0 2180.0,706.1 2182.0,680.1 2184.0,674.8 2186.0,634.0 2188.0,715.0 2190.0,726.6 2192.0,692.3 2194.0,668.2 2196.0,700.7 2198.0,717.4 2200.0,607.6 2202.0,729.8 2204.0,716.8 2206.0,715.8 2208.0,751.1 2210.0,722.0 2212.0,708.8 2214.0,727.4 2216.0,750.4 2218.0,705.7 2220.0,749.0 2222.0,779.8 2224.0,806.2 2226.0,724.8 2228.0,765.8 2230.0,777.8 2232.0,817.7 2234.0,751.4 2236.0,834.3 2238.0,731.8 2240.0,796.3 2242.0,783.7 2244.0,815.7 2246.0,808.3 2248.0,717.7 2250.0,774.0 2252.0,799.9 2254.0,740.5 2256.0,719.4 2258.0,811.1 2260.0,747.1 2262.0,748.1 2264.0,708.6 2266.0,771.5 2268.0,705.6 2270.0,768.7 2272.0,680.7 2274.0,713.4 2276.0,749.7 2278.0,709.0 2280.0,774.3 2282.0,745.2 2284.0,717.5 2286.0,774.2 2288.0,750.6 2290.0,805.0 2292.0,732.7 2294.0,761.2 2296.0,809.7 2298.0,815.3 2300.0,787.9 2302.0,722.8 2304.0,754.1 2306.0,793.3 2308.0,715.6 2310.0,709.6 2312.0,756.6 2314.0,749.0 2316.0,702.5 2318.0,695.8 2320.0,717.2 2322.0,789.9 2324.0,716.1 2326.0,763.7 2328.0,771.7 2330.0,785.5 2332.0,752.9 2334.0,809.3 2336.0,745.1 2338.0,786.8 2340.0,759.7 2342.0,844.9 2344.0,776.0 2346.0,769.2 2348.0,792.5 2350.0,788.7 2352.0,813.3 2354.0,718.2 2356.0,767.1 2358.0,776.4 2360.0,861.4 2362.0,763.2 2364.0,749.3 2366.0,791.1 2368.0,821.9 2370.0,723.0 2372.0,751.2 2374.0,805.2 2376.0,757.5 2378.0,774.4 2380.0,732.3 2382.0,831.7 2384.0,788.0 2386.0,753.1 2388.0,774.8 2390.0,673.9 2392.0,819.8 2394.0,755.5 2396.0,792.8 2398.0,795.4 2400.0,761.1 2402.0,735.1 2404.0,825.3 2406.0,757.1 2408.0,787.6 2410.0,772.2 2412.0,784.2 2414.0,715.3 2416.0,862.0 2418.0,773.2 2420.0,813.0 2422.0,825.7 2424.0,743.7 2426.0,708.6 2428.0,763.1 2430.0,739.9 2432.0,770.0 2434.0,780.6 2436.0,703.9 2438.0,815.5 2440.0,719.9 2442.0,810.7 2444.0,772.7 2446.0,774.9 2448.0,789.0 2450.0,772.6 2452.0,780.1 2454.0,748.3 2456.0,822.7 2458.0,860.3 2460.0,834.1 2462.0,807.5 2464.0,795.8 2466.0,753.7 2468.0,840.5 2470.0,753.5 2472.0,770.7 2474.0,758.5 2476.0,769.8 2478.0,735.1 2480.0,756.3 2482.0,712.5 2484.0,746.5 2486.0,819.7 2488.0,702.3 2490.0,734.4 2492.0,766.9 2494.0,766.9 2496.0,708.9 2498.0,772.4 2500.0,802.1 2502.0,769.1 2504.0,779.6 2506.0,835.5 2508.0,744.9 2510.0,809.6 2512.0,779.9 2514.0,854.3 2516.0,706.8 2518.0,797.6 2520.0,778.2 2522.0,811.2 2524.0,786.5 2526.0,809.0 2528.0,692.9 2530.0,810.7 2532.0,735.9 2534.0,734.3 2536.0,778.6 2538.0,712.8 2540.0,697.4 2542.0,773.3 2544.0,711.1 2546.0,757.8 2548.0,778.7 2550.0,761.0 2552.0,806.4 2554.0,729.1 2556.0,694.4 2558.0,763.5 2560.0,750.0 2562.0,746.1 2564.0,809.6 2566.0,751.3 2568.0,723.7 2570.0,834.0 2572.0,767.4 2574.0,796.0 2576.0,781.2 2578.0,802.6 2580.0,772.2 2582.0,814.7 2584.0,763.0 2586.0,767.7 2588.0,762.3 2590.0,693.0 2592.0,760.5 2594.0,734.3 2596.0,747.9 2598.0,684.9 2600.0,805.2 2602.0,705.4 2604.0,680.9 2606.0,690.6 2608.0,752.4 2610.0,743.9 2612.0,726.5" stroke="#006896" stroke-width="2"/><path d="M972.7,1177.3 C973.5,1177.1 974.5,1176.0 977.5,1176.3 C980.5,1176.6 986.9,1178.8 991.0,1179.0 C995.1,1179.2 997.8,1176.0 1002.0,1177.7 C1006.2,1179.4 1013.3,1188.0 1016.5,1189.4 C1019.7,1190.8 1019.0,1190.5 1021.4,1186.0 C1023.8,1181.5 1028.4,1166.9 1031.0,1162.7 C1033.6,1158.5 1035.3,1160.7 1037.0,1160.7 C1038.7,1160.7 1038.7,1160.1 1041.0,1162.7 C1043.3,1165.3 1047.9,1173.5 1050.6,1176.3 C1053.3,1179.1 1054.2,1177.7 1057.4,1179.3 C1060.6,1180.9 1066.7,1185.1 1070.0,1186.0 C1073.3,1186.9 1074.5,1184.4 1077.0,1184.7 C1079.5,1185.0 1081.8,1188.1 1084.7,1188.0 C1087.6,1187.9 1091.2,1181.3 1094.4,1184.0 C1097.6,1186.7 1101.6,1201.0 1104.0,1204.0 C1106.4,1207.0 1106.4,1199.3 1109.0,1201.7 C1111.6,1204.1 1116.4,1217.1 1119.8,1218.2 C1123.2,1219.3 1127.1,1209.6 1129.5,1208.5 C1131.9,1207.4 1132.0,1213.8 1134.4,1211.4 C1136.8,1209.0 1140.0,1199.1 1144.0,1193.9 C1148.0,1188.7 1155.4,1182.7 1158.7,1180.2 C1162.0,1177.7 1161.0,1180.5 1163.6,1178.9 C1166.2,1177.3 1171.2,1172.2 1174.3,1170.5 C1177.4,1168.8 1179.7,1169.8 1182.0,1168.5 C1184.3,1167.2 1186.2,1162.9 1188.0,1162.7 C1189.8,1162.5 1191.2,1165.0 1192.8,1167.6 C1194.4,1170.2 1196.1,1176.6 1197.7,1178.3 C1199.3,1180.0 1201.0,1179.2 1202.6,1177.7 C1204.2,1176.2 1205.6,1171.5 1207.4,1169.5 C1209.2,1167.5 1211.5,1166.4 1213.3,1165.6 C1215.1,1164.8 1216.2,1165.7 1218.0,1164.6 C1219.8,1163.5 1222.3,1159.7 1224.0,1158.8 C1225.7,1157.9 1225.9,1157.0 1228.0,1159.4 C1230.1,1161.8 1234.5,1170.9 1236.7,1173.4 C1239.0,1175.9 1239.5,1174.9 1241.5,1174.4 C1243.5,1174.0 1245.8,1170.7 1248.4,1170.7 C1251.0,1170.7 1253.8,1176.6 1257.0,1174.4 C1260.2,1172.2 1264.5,1161.7 1267.8,1157.8 C1271.1,1153.9 1274.0,1154.1 1276.6,1151.0 C1279.2,1147.9 1281.3,1142.5 1283.4,1139.3 C1285.5,1136.0 1287.4,1136.9 1289.3,1131.5 C1291.2,1126.1 1292.7,1119.8 1295.0,1107.0 C1297.3,1094.2 1300.7,1072.4 1303.0,1054.6 C1305.3,1036.8 1306.7,1024.7 1308.8,1000.0 C1310.9,975.4 1311.6,926.5 1315.5,906.7 C1319.4,886.9 1326.9,883.3 1332.0,881.0 C1337.1,878.7 1341.3,890.7 1346.0,893.0 C1350.7,895.3 1355.0,903.7 1360.0,895.0 C1365.0,886.3 1371.7,855.4 1376.0,841.0 C1380.3,826.6 1381.6,819.4 1385.6,808.5 C1389.5,797.6 1395.5,795.3 1399.7,775.8 C1403.9,756.3 1406.3,716.6 1411.0,691.6 C1415.7,666.6 1423.0,641.6 1427.7,626.0 C1432.4,610.4 1435.1,598.0 1439.0,598.0 C1442.9,598.0 1447.0,612.7 1451.0,626.0 C1455.0,639.3 1458.3,663.2 1463.0,677.6 C1467.7,692.0 1474.0,711.9 1479.0,712.6 C1484.0,713.3 1488.7,710.4 1493.0,682.0 C1497.3,653.6 1501.1,586.4 1505.0,542.0 C1508.9,497.6 1513.1,441.8 1516.6,415.6 C1520.1,389.4 1522.5,390.8 1526.0,385.0 C1529.5,379.2 1532.9,380.3 1537.6,380.6 C1542.3,380.9 1548.2,386.6 1554.0,386.6 C1559.8,386.6 1566.1,377.4 1572.7,380.6 C1579.3,383.8 1587.6,400.2 1593.8,406.0 C1600.0,411.8 1605.0,407.0 1610.0,415.6 C1615.0,424.2 1619.3,436.6 1624.0,457.7 C1628.7,478.8 1634.1,520.2 1638.0,542.0 C1641.9,563.8 1642.9,575.5 1647.6,588.7 C1652.3,601.9 1657.8,605.5 1666.0,621.0 C1674.2,636.5 1688.1,672.2 1696.7,682.0 C1705.3,691.8 1711.5,677.7 1717.7,680.0 C1723.9,682.3 1730.3,693.8 1734.0,696.0 C1737.7,698.2 1735.9,696.9 1740.0,693.0 C1744.1,689.1 1753.2,673.4 1758.8,672.7 C1764.4,672.0 1770.2,685.9 1773.5,688.8 C1776.8,691.6 1774.9,690.5 1778.7,689.8 C1782.5,689.1 1790.0,683.8 1796.5,684.6 C1803.0,685.4 1812.2,692.9 1817.4,694.6 C1822.6,696.3 1824.6,694.2 1827.9,694.6 C1831.2,695.0 1833.8,697.1 1837.3,696.7 C1840.8,696.3 1844.4,695.5 1848.8,692.0 C1853.2,688.5 1859.2,676.9 1863.4,675.8 C1867.6,674.7 1870.8,683.5 1873.9,685.6 C1877.1,687.7 1879.5,687.9 1882.3,688.4 C1885.1,688.9 1887.5,689.6 1890.6,688.4 C1893.7,687.2 1896.8,681.7 1901.0,681.0 C1905.2,680.3 1910.1,683.4 1915.7,684.0 C1921.3,684.6 1929.4,683.2 1934.6,684.6 C1939.8,686.0 1944.2,691.1 1947.0,692.3 C1949.8,693.5 1948.3,695.5 1951.3,692.0 C1954.3,688.5 1961.8,674.6 1964.9,671.4 C1968.0,668.2 1966.3,669.1 1970.0,673.0 C1973.7,676.9 1983.6,691.2 1986.9,695.0 C1990.2,698.8 1987.9,697.4 1990.0,696.0 C1992.1,694.6 1996.1,685.8 1999.4,686.7 C2002.7,687.6 2005.7,696.7 2009.9,701.3 C2014.1,705.9 2020.5,713.7 2024.5,714.3 C2028.5,714.9 2031.8,706.5 2034.0,705.0 C2036.2,703.5 2035.6,707.2 2038.0,705.0 C2040.4,702.8 2045.3,694.3 2048.6,692.0 C2051.9,689.7 2054.9,689.8 2058.0,691.0 C2061.1,692.2 2063.2,695.8 2067.4,699.0 C2071.6,702.2 2078.3,708.2 2083.0,710.0 C2087.7,711.8 2092.1,710.4 2095.6,709.7 C2099.1,709.0 2100.8,707.2 2104.0,706.0 C2107.2,704.8 2110.7,701.9 2114.5,702.4 C2118.3,702.9 2121.8,708.9 2127.0,708.7 C2132.2,708.5 2141.0,703.9 2145.9,701.3 C2150.8,698.7 2151.5,694.7 2156.3,693.0 C2161.2,691.3 2170.8,691.1 2175.0,691.3 C2179.2,691.5 2177.9,693.8 2181.4,694.0 C2184.9,694.2 2192.5,692.6 2196.0,692.6 C2199.5,692.6 2199.8,690.8 2202.3,694.0 C2204.8,697.2 2207.7,702.9 2211.0,712.0 C2214.3,721.1 2218.0,736.9 2222.0,748.9 C2226.0,760.9 2231.9,777.2 2235.0,783.8 C2238.1,790.4 2238.1,788.5 2240.5,788.4 C2242.9,788.3 2245.7,792.6 2249.7,783.0 C2253.7,773.4 2260.7,739.7 2264.4,730.5 C2268.1,721.3 2270.0,728.0 2271.8,727.7 C2273.7,727.4 2272.5,721.7 2275.5,728.6 C2278.5,735.5 2286.9,762.7 2290.0,769.0 C2293.1,775.3 2291.8,769.8 2294.0,766.4 C2296.2,763.0 2299.7,754.0 2303.0,748.9 C2306.3,743.8 2311.2,737.1 2314.0,735.6 C2316.8,734.1 2316.3,732.3 2319.7,739.7 C2323.1,747.1 2330.4,771.0 2334.4,780.0 C2338.4,789.0 2341.2,791.8 2343.6,794.0 C2346.0,796.2 2346.6,796.5 2349.0,793.0 C2351.4,789.5 2354.3,778.5 2358.3,772.8 C2362.3,767.1 2368.1,761.1 2373.0,759.0 C2377.9,756.9 2382.9,755.2 2387.8,760.0 C2392.7,764.8 2397.9,782.9 2402.5,787.5 C2407.1,792.1 2411.1,791.2 2415.4,787.5 C2419.7,783.8 2424.0,767.2 2428.3,765.4 C2432.6,763.6 2436.2,770.8 2441.0,776.5 C2445.8,782.2 2452.8,797.4 2456.8,799.5 C2460.8,801.6 2460.1,799.8 2465.0,789.4 C2469.9,779.0 2482.0,744.8 2486.3,737.0 C2490.6,729.2 2486.8,732.0 2490.9,742.4 C2495.0,752.8 2506.7,790.9 2511.0,799.5 C2515.3,808.1 2512.6,802.3 2516.6,794.0 C2520.6,785.7 2530.1,756.0 2535.0,749.8 C2539.9,743.6 2543.5,756.0 2546.0,757.0 C2548.5,758.0 2548.2,755.4 2549.8,756.0 C2551.4,756.6 2552.7,756.9 2555.3,760.8 C2557.9,764.7 2562.0,775.5 2565.4,779.2 C2568.8,782.9 2573.3,782.4 2575.6,783.0 C2577.9,783.6 2576.8,789.0 2579.2,783.0 C2581.6,777.0 2586.2,757.0 2590.3,747.0 C2594.4,737.0 2600.2,721.9 2604.0,723.0 C2607.8,724.1 2611.8,748.4 2613.3,753.5" stroke="#c8005f" stroke-width="2.3"/></g><line x1="972" y1="306.8" x2="972" y2="1284.3" stroke="#006896" stroke-width="2.2"/><line x1="959.5" y1="307.8" x2="972" y2="307.8" stroke="#006896" stroke-width="2.2"/><line x1="959.5" y1="404.7" x2="972" y2="404.7" stroke="#006896" stroke-width="2.2"/><line x1="959.5" y1="650" x2="972" y2="650" stroke="#006896" stroke-width="2.2"/><line x1="959.5" y1="895.5" x2="972" y2="895.5" stroke="#006896" stroke-width="2.2"/><line x1="959.5" y1="1141.5" x2="972" y2="1141.5" stroke="#006896" stroke-width="2.2"/><line x1="959.5" y1="1283.3" x2="972" y2="1283.3" stroke="#006896" stroke-width="2.2"/><line x1="971" y1="1292.3" x2="2615" y2="1292.3" stroke="#15171a" stroke-width="2.2"/><line x1="972" y1="1291.5" x2="972" y2="1300" stroke="#15171a" stroke-width="2.2"/><line x1="1014.6" y1="1291.5" x2="1014.6" y2="1300" stroke="#15171a" stroke-width="2.2"/><line x1="1162.5" y1="1291.5" x2="1162.5" y2="1300" stroke="#15171a" stroke-width="2.2"/><line x1="1310.4" y1="1291.5" x2="1310.4" y2="1300" stroke="#15171a" stroke-width="2.2"/><line x1="1458.3" y1="1291.5" x2="1458.3" y2="1300" stroke="#15171a" stroke-width="2.2"/><line x1="1606.2" y1="1291.5" x2="1606.2" y2="1300" stroke="#15171a" stroke-width="2.2"/><line x1="1754.1" y1="1291.5" x2="1754.1" y2="1300" stroke="#15171a" stroke-width="2.2"/><line x1="1902.0" y1="1291.5" x2="1902.0" y2="1300" stroke="#15171a" stroke-width="2.2"/><line x1="2049.9" y1="1291.5" x2="2049.9" y2="1300" stroke="#15171a" stroke-width="2.2"/><line x1="2197.8" y1="1291.5" x2="2197.8" y2="1300" stroke="#15171a" stroke-width="2.2"/><line x1="2345.7" y1="1291.5" x2="2345.7" y2="1300" stroke="#15171a" stroke-width="2.2"/><line x1="2493.6" y1="1291.5" x2="2493.6" y2="1300" stroke="#15171a" stroke-width="2.2"/><line x1="2614" y1="1291.5" x2="2614" y2="1300" stroke="#15171a" stroke-width="2.2"/></svg><div style="position:absolute;right:1746.5px;top:296.9px;font-size:20px;line-height:20px;color:#212529;font-weight:400;white-space:nowrap;">107.9</div><div style="position:absolute;right:1746.5px;top:393.8px;font-size:20px;line-height:20px;color:#212529;font-weight:400;white-space:nowrap;">100</div><div style="position:absolute;right:1746.5px;top:639.1px;font-size:20px;line-height:20px;color:#212529;font-weight:400;white-space:nowrap;">80</div><div style="position:absolute;right:1746.5px;top:884.6px;font-size:20px;line-height:20px;color:#212529;font-weight:400;white-space:nowrap;">60</div><div style="position:absolute;right:1746.5px;top:1130.6px;font-size:20px;line-height:20px;color:#212529;font-weight:400;white-space:nowrap;">40</div><div style="position:absolute;right:1746.5px;top:1272.4px;font-size:20px;line-height:20px;color:#212529;font-weight:400;white-space:nowrap;">28.4</div><div style="position:absolute;left:514.6px;width:1000px;text-align:center;top:1302.6px;font-size:20.3px;line-height:20.3px;color:#212529;font-weight:400;white-space:nowrap;">06:00</div><div style="position:absolute;left:662.5px;width:1000px;text-align:center;top:1302.6px;font-size:20.3px;line-height:20.3px;color:#212529;font-weight:400;white-space:nowrap;">09:00</div><div style="position:absolute;left:810.4000000000001px;width:1000px;text-align:center;top:1302.6px;font-size:20.3px;line-height:20.3px;color:#212529;font-weight:400;white-space:nowrap;">12:00</div><div style="position:absolute;left:958.3px;width:1000px;text-align:center;top:1302.6px;font-size:20.3px;line-height:20.3px;color:#212529;font-weight:400;white-space:nowrap;">15:00</div><div style="position:absolute;left:1106.2px;width:1000px;text-align:center;top:1302.6px;font-size:20.3px;line-height:20.3px;color:#212529;font-weight:400;white-space:nowrap;">18:00</div><div style="position:absolute;left:1254.1px;width:1000px;text-align:center;top:1302.6px;font-size:20.3px;line-height:20.3px;color:#212529;font-weight:400;white-space:nowrap;">21:00</div><div style="position:absolute;left:1402.0px;width:1000px;text-align:center;top:1302.6px;font-size:20.3px;line-height:20.3px;color:#212529;font-weight:400;white-space:nowrap;">Tue, 23</div><div style="position:absolute;left:1549.9px;width:1000px;text-align:center;top:1302.6px;font-size:20.3px;line-height:20.3px;color:#212529;font-weight:400;white-space:nowrap;">03:00</div><div style="position:absolute;left:1697.8000000000002px;width:1000px;text-align:center;top:1302.6px;font-size:20.3px;line-height:20.3px;color:#212529;font-weight:400;white-space:nowrap;">06:00</div><div style="position:absolute;left:1845.6999999999998px;width:1000px;text-align:center;top:1302.6px;font-size:20.3px;line-height:20.3px;color:#212529;font-weight:400;white-space:nowrap;">09:00</div><div style="position:absolute;left:1993.6px;width:1000px;text-align:center;top:1302.6px;font-size:20.3px;line-height:20.3px;color:#212529;font-weight:400;white-space:nowrap;">12:00</div><div style="position:absolute;left:972px;top:1340px;width:64px;height:64px;background:#fff;border:2px solid #e0e0e0;border-radius:6px;box-sizing:border-box;"></div><svg style="position:absolute;left:996px;top:1362px;" width="16" height="20" viewBox="996 1362 16 20"><polygon points="1000,1372 1007,1365.5 1007,1378.5" fill="#444"/></svg><div style="position:absolute;left:1044px;top:1340px;width:252px;height:64px;background:#fff;border:2px solid #e0e0e0;border-radius:6px;box-sizing:border-box;"></div><div style="position:absolute;left:1070.7px;top:1359.9px;font-size:28px;line-height:28px;color:#212529;font-weight:400;white-space:nowrap;letter-spacing:1.3px;">22/04/2019</div><svg style="position:absolute;left:1246px;top:1352px;" width="36" height="38" viewBox="1246 1352 36 38"><rect x="1250.1" y="1358.9" width="25.4" height="25.7" rx="2.2" fill="none" stroke="#999" stroke-width="2.2"/><line x1="1250.1" y1="1367" x2="1275.5" y2="1367" stroke="#999" stroke-width="2.2"/><rect x="1255.7" y="1356" width="3.6" height="5.6" fill="#999"/><rect x="1267.8" y="1356" width="3.6" height="5.6" fill="#999"/><rect x="1265.4" y="1374.2" width="7.8" height="7.6" fill="#999"/></svg><div style="position:absolute;left:1304px;top:1340px;width:280px;height:64px;background:#fff;border:2px solid #e0e0e0;border-radius:6px;box-sizing:border-box;"></div><div style="position:absolute;left:1330.5px;top:1359.9px;font-size:28px;line-height:28px;color:#212529;font-weight:400;white-space:nowrap;letter-spacing:0.2px;">05:07:38</div><svg style="position:absolute;left:1536px;top:1356px;" width="32" height="32" viewBox="1536 1356 32 32"><circle cx="1552" cy="1372" r="12.8" fill="none" stroke="#999" stroke-width="2.2"/><polyline points="1550.5,1364 1550.5,1373 1559,1373" fill="none" stroke="#999" stroke-width="2.2"/></svg><div style="position:absolute;left:1618px;top:1340px;width:64px;height:64px;background:#fff;border:2px solid #e0e0e0;border-radius:6px;box-sizing:border-box;"></div><svg style="position:absolute;left:1630px;top:1352px;" width="40" height="40" viewBox="1630 1352 40 40"><g fill="none" stroke="#555" stroke-width="1.6"><polyline points="1634.6,1355.8 1634.6,1387.9 1666,1387.9"/><line x1="1635" y1="1370.9" x2="1663" y2="1370.9"/><polyline points="1636.3,1385.2 1636.3,1383.5 1642.6,1383.5 1642.6,1380.5 1648,1380.5 1648,1378 1654.5,1378 1654.5,1375 1660,1375"/></g><path d="M1636,1370 Q1640,1362 1648,1362 Q1654,1362 1659.5,1358.5" fill="none" stroke="#555" stroke-width="2.6" stroke-linecap="round"/></svg><div style="position:absolute;left:1691px;top:1340px;width:205px;height:64px;background:#fff;border:2px solid #e0e0e0;border-radius:6px;box-sizing:border-box;"></div><div style="position:absolute;left:1832.5px;top:1341px;width:2.0px;height:62px;background:#e0e0e0;"></div><div style="position:absolute;left:1717.9px;top:1358.2px;font-size:28px;line-height:28px;color:#212529;font-weight:400;white-space:nowrap;letter-spacing:-0.3px;">± 1 day</div><svg style="position:absolute;left:1846px;top:1352px;" width="34" height="40" viewBox="1846 1352 34 40"><rect x="1854.2" y="1367.5" width="19" height="16.5" rx="2" fill="none" stroke="#555" stroke-width="2.4"/><path d="M1857.5,1367.5 L1857.5,1363 A6,6 0 0 1 1869.5,1363 L1869.5,1364" fill="none" stroke="#555" stroke-width="2.4"/><circle cx="1863.6" cy="1375.8" r="2" fill="#555"/></svg><div style="position:absolute;left:1905px;top:1340px;width:63px;height:64px;background:#fff;border:2px solid #e0e0e0;border-radius:6px;box-sizing:border-box;"></div><svg style="position:absolute;left:1918px;top:1355px;" width="36" height="35" viewBox="1918 1355 36 35"><path d="M1925.5,1366 A11,11 0 1 1 1926,1378" fill="none" stroke="#555" stroke-width="2.4"/><polygon points="1921,1364 1930,1364 1925.5,1371" fill="#555"/><polyline points="1935.5,1365 1935.5,1373 1940.5,1376" fill="none" stroke="#555" stroke-width="2"/></svg><div style="position:absolute;left:2003px;top:1340px;width:251px;height:64px;background:#fff;border:2px solid #e0e0e0;border-radius:6px;box-sizing:border-box;"></div><div style="position:absolute;left:2028.2px;top:1359.9px;font-size:28px;line-height:28px;color:#212529;font-weight:400;white-space:nowrap;letter-spacing:1.3px;">23/04/2019</div><svg style="position:absolute;left:2204px;top:1352px;" width="36" height="38" viewBox="2204 1352 36 38"><rect x="2208.1" y="1358.9" width="25.4" height="25.7" rx="2.2" fill="none" stroke="#999" stroke-width="2.2"/><line x1="2208.1" y1="1367" x2="2233.5" y2="1367" stroke="#999" stroke-width="2.2"/><rect x="2213.7" y="1356" width="3.6" height="5.6" fill="#999"/><rect x="2225.8" y="1356" width="3.6" height="5.6" fill="#999"/><rect x="2223.4" y="1374.2" width="7.8" height="7.6" fill="#999"/></svg><div style="position:absolute;left:2263px;top:1340px;width:279px;height:64px;background:#fff;border:2px solid #e0e0e0;border-radius:6px;box-sizing:border-box;"></div><div style="position:absolute;left:2289.5px;top:1359.9px;font-size:28px;line-height:28px;color:#212529;font-weight:400;white-space:nowrap;letter-spacing:0.2px;">14:25:57</div><svg style="position:absolute;left:2493px;top:1356px;" width="32" height="32" viewBox="2493 1356 32 32"><circle cx="2509.3" cy="1372" r="12.8" fill="none" stroke="#999" stroke-width="2.2"/><polyline points="2507.8,1364 2507.8,1373 2516.3,1373" fill="none" stroke="#999" stroke-width="2.2"/></svg><div style="position:absolute;left:2551px;top:1340px;width:63px;height:64px;background:#fff;border:2px solid #e0e0e0;border-radius:6px;box-sizing:border-box;"></div><svg style="position:absolute;left:2574px;top:1362px;" width="16" height="20" viewBox="2574 1362 16 20"><polygon points="2586,1372 2579,1365.5 2579,1378.5" fill="#444"/></svg><svg style="position:absolute;left:877px;top:1410px;" width="1753" height="110" viewBox="877 1410 1753 110"><rect x="973" y="1420.5" width="1640" height="59.5" fill="none" stroke="#dedede" stroke-width="2"/><path d="M972.0,1440.0 975.0,1462.1 978.0,1451.7 981.0,1454.3 984.0,1455.0 987.0,1447.0 990.0,1458.3 993.0,1451.9 996.0,1470.8 999.0,1449.0 1002.0,1453.0 1005.0,1454.6 1008.0,1456.8 1011.0,1456.0 1014.0,1459.6 1017.0,1461.8 1020.0,1457.0 1023.0,1463.5 1026.0,1456.1 1029.0,1459.5 1032.0,1465.4 1035.0,1458.0 1038.0,1455.7 1041.0,1459.3 1044.0,1461.7 1047.0,1466.0 1050.0,1453.8 1053.0,1458.5 1056.0,1463.7 1059.0,1453.2 1062.0,1472.6 1065.0,1475.3 1068.0,1471.6 1071.0,1470.2 1074.0,1473.6 1077.0,1457.7 1080.0,1478.0 1083.0,1464.8 1086.0,1466.0 1089.0,1475.7 1092.0,1473.4 1095.0,1467.7 1098.0,1467.4 1101.0,1473.4 1104.0,1470.7 1107.0,1477.0 1110.0,1471.2 1113.0,1470.2 1116.0,1475.3 1119.0,1467.8 1122.0,1467.5 1125.0,1475.4 1128.0,1472.2 1131.0,1465.7 1134.0,1468.2 1137.0,1473.6 1140.0,1441.0 1143.0,1460.1 1146.0,1452.6 1149.0,1444.1 1152.0,1455.7 1155.0,1447.8 1158.0,1457.2 1161.0,1441.9 1164.0,1452.4 1167.0,1456.9 1170.0,1460.4 1173.0,1440.5 1176.0,1454.4 1179.0,1454.4 1182.0,1448.8 1185.0,1460.0 1188.0,1443.7 1191.0,1456.0 1194.0,1446.9 1197.0,1460.1 1200.0,1449.0 1203.0,1450.5 1206.0,1463.6 1209.0,1478.0 1212.0,1469.1 1215.0,1471.6 1218.0,1473.2 1221.0,1469.1 1224.0,1466.6 1227.0,1468.0 1230.0,1468.3 1233.0,1478.0 1236.0,1461.0 1239.0,1470.6 1242.0,1442.9 1245.0,1444.6 1248.0,1444.9 1251.0,1436.5 1254.0,1438.4 1257.0,1446.6 1260.0,1448.1 1263.0,1443.6 1266.0,1442.3 1269.0,1441.2 1272.0,1444.9 1275.0,1441.4 1278.0,1446.9 1281.0,1437.9 1284.0,1445.2 1287.0,1441.1 1290.0,1445.5 1293.0,1442.8 1296.0,1453.2 1299.0,1443.9 1302.0,1446.1 1305.0,1431.3 1308.0,1445.9 1311.0,1441.2 1314.0,1446.5 1317.0,1432.3 1320.0,1452.7 1323.0,1445.0 1326.0,1435.3 1329.0,1441.6 1332.0,1441.7 1335.0,1444.9 1338.0,1472.6 1341.0,1477.3 1344.0,1464.9 1347.0,1473.6 1350.0,1469.0 1353.0,1477.1 1356.0,1469.4 1359.0,1474.2 1362.0,1462.6 1365.0,1471.5 1368.0,1467.0 1371.0,1478.0 1374.0,1469.6 1377.0,1467.3 1380.0,1468.7 1383.0,1477.5 1386.0,1444.0 1389.0,1445.6 1392.0,1452.0 1395.0,1457.3 1398.0,1441.8 1401.0,1446.2 1404.0,1444.2 1407.0,1444.9 1410.0,1453.0 1413.0,1450.5 1416.0,1446.3 1419.0,1463.4 1422.0,1461.8 1425.0,1462.3 1428.0,1455.3 1431.0,1463.3 1434.0,1463.4 1437.0,1458.5 1440.0,1461.6 1443.0,1459.6 1446.0,1456.3 1449.0,1460.3 1452.0,1452.5 1455.0,1456.2 1458.0,1459.7 1461.0,1457.0 1464.0,1461.8 1467.0,1443.7 1470.0,1464.0 1473.0,1452.2 1476.0,1457.6 1479.0,1459.2 1482.0,1458.8 1485.0,1461.2 1488.0,1454.5 1491.0,1462.4 1494.0,1451.4 1497.0,1456.0 1500.0,1459.7 1503.0,1452.0 1506.0,1466.2 1509.0,1455.7 1512.0,1478.0 1515.0,1466.3 1518.0,1469.4 1521.0,1472.5 1524.0,1473.7 1527.0,1430.0 1530.0,1473.8 1533.0,1458.1 1536.0,1465.8 1539.0,1452.8 1542.0,1464.8 1545.0,1454.1 1548.0,1456.3 1551.0,1458.0 1554.0,1455.5 1557.0,1462.1 1560.0,1463.0 1563.0,1457.5 1566.0,1461.3 1569.0,1464.5 1572.0,1454.7 1575.0,1457.3 1578.0,1455.4 1581.0,1450.8 1584.0,1463.6 1587.0,1448.0 1590.0,1473.1 1593.0,1455.6 1596.0,1461.8 1599.0,1454.3 1602.0,1445.7 1605.0,1457.1 1608.0,1445.9 1611.0,1449.4 1614.0,1449.6 1617.0,1448.3 1620.0,1448.5 1623.0,1445.9 1626.0,1450.0 1629.0,1440.4 1632.0,1452.8 1635.0,1444.3 1638.0,1456.2 1641.0,1452.0 1644.0,1438.1 1647.0,1453.7 1650.0,1448.2 1653.0,1444.9 1656.0,1472.4 1659.0,1464.9 1662.0,1461.5 1665.0,1470.6 1668.0,1467.9 1671.0,1468.8 1674.0,1462.6 1677.0,1473.2 1680.0,1433.8 1683.0,1425.6 1686.0,1431.6 1689.0,1433.0 1692.0,1429.8 1695.0,1440.5 1698.0,1429.2 1701.0,1427.3 1704.0,1430.8 1707.0,1433.4 1710.0,1441.8 1713.0,1426.4 1716.0,1432.9 1719.0,1433.9 1722.0,1430.8 1725.0,1441.7 1728.0,1425.0 1731.0,1436.2 1734.0,1431.1 1737.0,1434.3 1740.0,1425.8 1743.0,1441.9 1746.0,1427.8 1749.0,1432.4 1752.0,1423.0 1755.0,1430.9 1758.0,1435.9 1761.0,1435.0 1764.0,1470.0 1767.0,1449.5 1770.0,1447.2 1773.0,1444.6 1776.0,1449.5 1779.0,1446.7 1782.0,1444.3 1785.0,1449.3 1788.0,1449.9 1791.0,1444.3 1794.0,1444.0 1797.0,1455.4 1800.0,1452.5 1803.0,1441.1 1806.0,1469.1 1809.0,1468.1 1812.0,1474.4 1815.0,1458.7 1818.0,1474.4 1821.0,1473.2 1824.0,1463.1 1827.0,1440.0 1830.0,1431.1 1833.0,1428.6 1836.0,1434.0 1839.0,1425.1 1842.0,1432.8 1845.0,1440.9 1848.0,1424.4 1851.0,1441.6 1854.0,1427.8 1857.0,1436.3 1860.0,1430.1 1863.0,1423.0 1866.0,1434.3 1869.0,1446.0 1872.0,1438.8 1875.0,1440.8 1878.0,1448.4 1881.0,1440.5 1884.0,1438.2 1887.0,1444.7 1890.0,1449.1 1893.0,1440.2 1896.0,1448.9 1899.0,1448.5 1902.0,1478.0 1905.0,1447.2 1908.0,1448.9 1911.0,1454.6 1914.0,1455.8 1917.0,1451.3 1920.0,1453.7 1923.0,1449.0 1926.0,1454.2 1929.0,1449.4 1932.0,1451.6 1935.0,1447.3 1938.0,1448.1 1941.0,1453.3 1944.0,1448.4 1947.0,1450.3 1950.0,1464.1 1953.0,1467.1 1956.0,1478.0 1959.0,1466.8 1962.0,1464.4 1965.0,1473.6 1968.0,1468.9 1971.0,1442.4 1974.0,1452.1 1977.0,1440.4 1980.0,1434.8 1983.0,1455.8 1986.0,1441.7 1989.0,1453.5 1992.0,1440.2 1995.0,1442.4 1998.0,1455.0 2001.0,1438.2 2004.0,1449.1 2007.0,1451.7 2010.0,1443.4 2013.0,1445.4 2016.0,1446.6 2019.0,1449.3 2022.0,1440.8 2025.0,1450.3 2028.0,1447.1 2031.0,1454.6 2034.0,1439.7 2037.0,1442.9 2040.0,1451.0 2043.0,1442.8 2046.0,1448.0 2049.0,1445.9 2052.0,1450.6 2055.0,1440.8 2058.0,1447.0 2061.0,1435.5 2064.0,1447.6 2067.0,1454.3 2070.0,1439.9 2073.0,1444.5 2076.0,1442.4 2079.0,1451.0 2082.0,1445.5 2085.0,1440.6 2088.0,1451.3 2091.0,1445.7 2094.0,1448.6 2097.0,1465.7 2100.0,1478.0 2103.0,1468.1 2106.0,1468.6 2109.0,1468.1 2112.0,1470.1 2115.0,1474.1 2118.0,1467.1 2121.0,1451.1 2124.0,1446.2 2127.0,1450.4 2130.0,1447.5 2133.0,1444.0 2136.0,1438.1 2139.0,1451.3 2142.0,1448.7 2145.0,1445.0 2148.0,1448.0 2151.0,1442.9 2154.0,1445.4 2157.0,1428.8 2160.0,1439.7 2163.0,1429.8 2166.0,1429.6 2169.0,1427.4 2172.0,1434.2 2175.0,1438.4 2178.0,1444.9 2181.0,1442.0 2184.0,1453.5 2187.0,1449.0 2190.0,1447.1 2193.0,1447.3 2196.0,1449.2 2199.0,1445.9 2202.0,1448.1 2205.0,1441.1 2208.0,1453.9 2211.0,1443.8 2214.0,1454.0 2217.0,1433.2 2220.0,1453.3 2223.0,1448.6 2226.0,1442.5 2229.0,1450.6 2232.0,1450.2 2235.0,1448.9 2238.0,1466.5 2241.0,1470.5 2244.0,1474.6 2247.0,1473.2 2250.0,1467.7 2253.0,1470.1 2256.0,1470.7 2259.0,1473.9 2262.0,1463.4 2265.0,1466.6 2268.0,1473.3 2271.0,1465.1 2274.0,1469.9 2277.0,1471.6 2280.0,1471.8 2283.0,1456.5 2286.0,1467.6 2289.0,1452.9 2292.0,1468.0 2295.0,1454.2 2298.0,1460.0 2301.0,1467.4 2304.0,1458.9 2307.0,1459.5 2310.0,1461.8 2313.0,1464.9 2316.0,1460.8 2319.0,1462.0 2322.0,1466.5 2325.0,1456.8 2328.0,1461.5 2331.0,1459.0 2334.0,1468.0 2337.0,1463.7 2340.0,1465.3 2343.0,1459.2 2346.0,1461.4 2349.0,1465.9 2352.0,1428.0 2355.0,1467.3 2358.0,1464.3 2361.0,1458.5 2364.0,1464.1 2367.0,1462.7 2370.0,1470.5 2373.0,1470.2 2376.0,1457.1 2379.0,1463.3 2382.0,1453.4 2385.0,1468.7 2388.0,1462.5 2391.0,1458.5 2394.0,1468.6 2397.0,1454.8 2400.0,1465.4 2403.0,1464.0 2406.0,1457.5 2409.0,1469.2 2412.0,1465.6 2415.0,1442.9 2418.0,1460.0 2421.0,1468.5 2424.0,1461.6 2427.0,1450.4 2430.0,1441.3 2433.0,1440.2 2436.0,1439.6 2439.0,1443.8 2442.0,1439.9 2445.0,1446.6 2448.0,1442.1 2451.0,1440.0 2454.0,1443.1 2457.0,1443.3 2460.0,1458.2 2463.0,1451.4 2466.0,1464.2 2469.0,1456.5 2472.0,1464.6 2475.0,1455.0 2478.0,1460.0 2481.0,1458.3 2484.0,1464.4 2487.0,1455.2 2490.0,1456.5 2493.0,1459.9 2496.0,1455.5 2499.0,1459.6 2502.0,1457.1 2505.0,1442.2 2508.0,1448.5 2511.0,1435.3 2514.0,1461.0 2517.0,1459.1 2520.0,1463.2 2523.0,1453.6 2526.0,1459.6 2529.0,1461.3 2532.0,1462.4 2535.0,1458.7 2538.0,1458.0 2541.0,1457.4 2544.0,1464.0 2547.0,1465.0 2550.0,1458.3 2553.0,1460.1 2556.0,1461.5 2559.0,1455.1 2562.0,1460.7 2565.0,1445.5 2568.0,1447.8 2571.0,1445.2 2574.0,1441.0 2577.0,1453.3 2580.0,1450.7 2583.0,1441.3 2586.0,1448.2 2589.0,1446.3 2592.0,1457.7 2595.0,1426.0 2598.0,1464.9 2601.0,1478.0 2604.0,1461.3 2607.0,1452.7 2610.0,1453.2 2613.0,1455.2" fill="none" stroke="#5c9fc0" stroke-width="2"/><path d="M1575.0,1461.0 1578.0,1451.9 1581.0,1455.6 1584.0,1458.2 1587.0,1448.1 1590.0,1468.5 1593.0,1454.5 1596.0,1459.2 1599.0,1458.2 1602.0,1445.4 1605.0,1451.7 1608.0,1448.1 1611.0,1452.4 1614.0,1450.8 1617.0,1444.8 1620.0,1447.2 1623.0,1446.9 1626.0,1454.5 1629.0,1446.2 1632.0,1453.5 1635.0,1449.3 1638.0,1452.7 1641.0,1452.1 1644.0,1443.8 1647.0,1449.5 1650.0,1448.6 1653.0,1448.0 1656.0,1468.1 1659.0,1468.3 1662.0,1466.1 1665.0,1472.2 1668.0,1466.1 1671.0,1468.8 1674.0,1468.5 1677.0,1473.2 1680.0,1431.2 1683.0,1428.8 1686.0,1435.4 1689.0,1432.5 1692.0,1431.7 1695.0,1443.6 1698.0,1430.3 1701.0,1429.0 1704.0,1428.9 1707.0,1431.3 1710.0,1441.7 1713.0,1428.4 1716.0,1429.7 1719.0,1430.9 1722.0,1431.3 1725.0,1439.8 1728.0,1426.0 1731.0,1436.4 1734.0,1430.3 1737.0,1434.3 1740.0,1429.6 1743.0,1439.5 1746.0,1428.4 1749.0,1431.9 1752.0,1427.3 1755.0,1428.2 1758.0,1434.8 1761.0,1435.1 1764.0,1449.3 1767.0,1448.0 1770.0,1446.3 1773.0,1445.6 1776.0,1446.3 1779.0,1445.9 1782.0,1446.0 1785.0,1448.7 1788.0,1445.7 1791.0,1444.2 1794.0,1439.5 1797.0,1453.7 1800.0,1448.6 1803.0,1443.7 1806.0,1466.3 1809.0,1468.2 1812.0,1473.4 1815.0,1465.3 1818.0,1468.8 1821.0,1473.6 1824.0,1465.0 1827.0,1434.8 1830.0,1432.6 1833.0,1429.2 1836.0,1432.4 1839.0,1426.1 1842.0,1433.0 1845.0,1437.4 1848.0,1427.0 1851.0,1435.3 1854.0,1428.1 1857.0,1435.6 1860.0,1434.0 1863.0,1426.2 1866.0,1436.9 1869.0,1445.1 1872.0,1438.1 1875.0,1443.6 1878.0,1444.2 1881.0,1442.9 1884.0,1443.2 1887.0,1443.6 1890.0,1446.8 1893.0,1447.8 1896.0,1447.5 1899.0,1447.3 1902.0,1444.1 1905.0,1448.8 1908.0,1449.9 1911.0,1454.5 1914.0,1448.2 1917.0,1455.1 1920.0,1450.3 1923.0,1447.5 1926.0,1454.6 1929.0,1450.5 1932.0,1448.6 1935.0,1449.6 1938.0,1446.8 1941.0,1451.0 1944.0,1446.0 1947.0,1448.9 1950.0,1460.2 1953.0,1468.1 1956.0,1477.2 1959.0,1469.9 1962.0,1466.1 1965.0,1470.1 1968.0,1468.2 1971.0,1447.9 1974.0,1449.7 1977.0,1443.4 1980.0,1439.0 1983.0,1452.4 1986.0,1444.5 1989.0,1450.5 1992.0,1442.1 1995.0,1441.8 1998.0,1449.2 2001.0,1442.3 2004.0,1449.7 2007.0,1451.7 2010.0,1444.6 2013.0,1443.5 2016.0,1447.9 2019.0,1449.5 2022.0,1439.1 2025.0,1450.5 2028.0,1448.1 2031.0,1455.3 2034.0,1439.4 2037.0,1440.9 2040.0,1450.9 2043.0,1439.6 2046.0,1445.4 2049.0,1443.2 2052.0,1446.2 2055.0,1438.1 2058.0,1446.0 2061.0,1442.1 2064.0,1448.0 2067.0,1452.1 2070.0,1441.4 2073.0,1448.7 2076.0,1445.1 2079.0,1451.6 2082.0,1441.8 2085.0,1443.6 2088.0,1446.3 2091.0,1446.7 2094.0,1448.0 2097.0,1464.6 2100.0,1475.6 2103.0,1471.7 2106.0,1470.4 2109.0,1470.3 2112.0,1467.9 2115.0,1470.8 2118.0,1465.5 2121.0,1449.4 2124.0,1449.1 2127.0,1449.7 2130.0,1446.9 2133.0,1442.0 2136.0,1442.4 2139.0,1448.6 2142.0,1442.9 2145.0,1441.1 2148.0,1446.4 2151.0,1441.9 2154.0,1449.8 2157.0,1430.2 2160.0,1434.0 2163.0,1429.5 2166.0,1434.5 2169.0,1426.9 2172.0,1435.2 2175.0,1436.9 2178.0,1449.0 2181.0,1444.9 2184.0,1449.5 2187.0,1449.1 2190.0,1446.8 2193.0,1449.2 2196.0,1447.8 2199.0,1450.9 2202.0,1447.0 2205.0,1444.2 2208.0,1449.1 2211.0,1445.0 2214.0,1450.9 2217.0,1438.8 2220.0,1452.6 2223.0,1446.3 2226.0,1441.8 2229.0,1452.4 2232.0,1448.6 2235.0,1446.9 2238.0,1470.8 2241.0,1472.3 2244.0,1466.2 2247.0,1471.0 2250.0,1470.6 2253.0,1472.2 2256.0,1469.2 2259.0,1476.3 2262.0,1464.1 2265.0,1467.4 2268.0,1472.4 2271.0,1467.1 2274.0,1472.0 2277.0,1473.5 2280.0,1471.0 2283.0,1462.2 2286.0,1463.7 2289.0,1456.0 2292.0,1469.9 2295.0,1457.6 2298.0,1463.5 2301.0,1464.2 2304.0,1459.6 2307.0,1460.3 2310.0,1462.4 2313.0,1463.0 2316.0,1461.4 2319.0,1463.7 2322.0,1467.8 2325.0,1459.2 2328.0,1463.4 2331.0,1462.5 2334.0,1463.0 2337.0,1459.2 2340.0,1468.1 2343.0,1463.7 2346.0,1461.9 2349.0,1465.3 2352.0,1458.7 2355.0,1462.2 2358.0,1464.6 2361.0,1456.7 2364.0,1466.0 2367.0,1461.2 2370.0,1468.3 2373.0,1472.2 2376.0,1464.3 2379.0,1462.6 2382.0,1460.0 2385.0,1463.9 2388.0,1461.3 2391.0,1461.3 2394.0,1469.9 2397.0,1456.7 2400.0,1465.9 2403.0,1463.9 2406.0,1456.6 2409.0,1466.5 2412.0,1468.4 2415.0,1450.8 2418.0,1462.5 2421.0,1468.4 2424.0,1460.4 2427.0,1458.6 2430.0,1444.6 2433.0,1444.1 2436.0,1443.1 2439.0,1441.2 2442.0,1438.5 2445.0,1442.1 2448.0,1439.0 2451.0,1438.1 2454.0,1444.4 2457.0,1445.7 2460.0,1456.6 2463.0,1456.1 2466.0,1458.6 2469.0,1456.3 2472.0,1459.6 2475.0,1452.2 2478.0,1459.4 2481.0,1458.4 2484.0,1460.9 2487.0,1455.1 2490.0,1454.7 2493.0,1458.8 2496.0,1455.0 2499.0,1459.6 2502.0,1454.5 2505.0,1442.3 2508.0,1446.8 2511.0,1440.7 2514.0,1463.3 2517.0,1460.0 2520.0,1460.3 2523.0,1451.6 2526.0,1459.7 2529.0,1464.3 2532.0,1465.6 2535.0,1452.9 2538.0,1456.9 2541.0,1457.6 2544.0,1459.8 2547.0,1463.5 2550.0,1459.1 2553.0,1458.8 2556.0,1460.8 2559.0,1453.1 2562.0,1458.0 2565.0,1443.5 2568.0,1449.3 2571.0,1441.5 2574.0,1442.5 2577.0,1452.3 2580.0,1448.7 2583.0,1445.2 2586.0,1445.7 2589.0,1447.3 2592.0,1458.9 2595.0,1455.9 2598.0,1462.8 2601.0,1455.4 2604.0,1458.8 2607.0,1453.9 2610.0,1457.9 2613.0,1456.6" fill="none" stroke="#d85a98" stroke-width="2"/><path d="M1389.5,1419.6 L1411.5,1419.6 L1415.2,1423.3 L1415.2,1498 Q1415.2,1504 1409.2,1504 L1391.6,1504 Q1385.6,1504 1385.6,1498 L1385.6,1423.3 Z" fill="#f4f4f4" stroke="#111" stroke-width="2"/><clipPath id="hc"><rect x="1386.5" y="1421" width="28" height="58"/></clipPath><path d="M972.0,1440.0 975.0,1462.1 978.0,1451.7 981.0,1454.3 984.0,1455.0 987.0,1447.0 990.0,1458.3 993.0,1451.9 996.0,1470.8 999.0,1449.0 1002.0,1453.0 1005.0,1454.6 1008.0,1456.8 1011.0,1456.0 1014.0,1459.6 1017.0,1461.8 1020.0,1457.0 1023.0,1463.5 1026.0,1456.1 1029.0,1459.5 1032.0,1465.4 1035.0,1458.0 1038.0,1455.7 1041.0,1459.3 1044.0,1461.7 1047.0,1466.0 1050.0,1453.8 1053.0,1458.5 1056.0,1463.7 1059.0,1453.2 1062.0,1472.6 1065.0,1475.3 1068.0,1471.6 1071.0,1470.2 1074.0,1473.6 1077.0,1457.7 1080.0,1478.0 1083.0,1464.8 1086.0,1466.0 1089.0,1475.7 1092.0,1473.4 1095.0,1467.7 1098.0,1467.4 1101.0,1473.4 1104.0,1470.7 1107.0,1477.0 1110.0,1471.2 1113.0,1470.2 1116.0,1475.3 1119.0,1467.8 1122.0,1467.5 1125.0,1475.4 1128.0,1472.2 1131.0,1465.7 1134.0,1468.2 1137.0,1473.6 1140.0,1441.0 1143.0,1460.1 1146.0,1452.6 1149.0,1444.1 1152.0,1455.7 1155.0,1447.8 1158.0,1457.2 1161.0,1441.9 1164.0,1452.4 1167.0,1456.9 1170.0,1460.4 1173.0,1440.5 1176.0,1454.4 1179.0,1454.4 1182.0,1448.8 1185.0,1460.0 1188.0,1443.7 1191.0,1456.0 1194.0,1446.9 1197.0,1460.1 1200.0,1449.0 1203.0,1450.5 1206.0,1463.6 1209.0,1478.0 1212.0,1469.1 1215.0,1471.6 1218.0,1473.2 1221.0,1469.1 1224.0,1466.6 1227.0,1468.0 1230.0,1468.3 1233.0,1478.0 1236.0,1461.0 1239.0,1470.6 1242.0,1442.9 1245.0,1444.6 1248.0,1444.9 1251.0,1436.5 1254.0,1438.4 1257.0,1446.6 1260.0,1448.1 1263.0,1443.6 1266.0,1442.3 1269.0,1441.2 1272.0,1444.9 1275.0,1441.4 1278.0,1446.9 1281.0,1437.9 1284.0,1445.2 1287.0,1441.1 1290.0,1445.5 1293.0,1442.8 1296.0,1453.2 1299.0,1443.9 1302.0,1446.1 1305.0,1431.3 1308.0,1445.9 1311.0,1441.2 1314.0,1446.5 1317.0,1432.3 1320.0,1452.7 1323.0,1445.0 1326.0,1435.3 1329.0,1441.6 1332.0,1441.7 1335.0,1444.9 1338.0,1472.6 1341.0,1477.3 1344.0,1464.9 1347.0,1473.6 1350.0,1469.0 1353.0,1477.1 1356.0,1469.4 1359.0,1474.2 1362.0,1462.6 1365.0,1471.5 1368.0,1467.0 1371.0,1478.0 1374.0,1469.6 1377.0,1467.3 1380.0,1468.7 1383.0,1477.5 1386.0,1444.0 1389.0,1445.6 1392.0,1452.0 1395.0,1457.3 1398.0,1441.8 1401.0,1446.2 1404.0,1444.2 1407.0,1444.9 1410.0,1453.0 1413.0,1450.5 1416.0,1446.3 1419.0,1463.4 1422.0,1461.8 1425.0,1462.3 1428.0,1455.3 1431.0,1463.3 1434.0,1463.4 1437.0,1458.5 1440.0,1461.6 1443.0,1459.6 1446.0,1456.3 1449.0,1460.3 1452.0,1452.5 1455.0,1456.2 1458.0,1459.7 1461.0,1457.0 1464.0,1461.8 1467.0,1443.7 1470.0,1464.0 1473.0,1452.2 1476.0,1457.6 1479.0,1459.2 1482.0,1458.8 1485.0,1461.2 1488.0,1454.5 1491.0,1462.4 1494.0,1451.4 1497.0,1456.0 1500.0,1459.7 1503.0,1452.0 1506.0,1466.2 1509.0,1455.7 1512.0,1478.0 1515.0,1466.3 1518.0,1469.4 1521.0,1472.5 1524.0,1473.7 1527.0,1430.0 1530.0,1473.8 1533.0,1458.1 1536.0,1465.8 1539.0,1452.8 1542.0,1464.8 1545.0,1454.1 1548.0,1456.3 1551.0,1458.0 1554.0,1455.5 1557.0,1462.1 1560.0,1463.0 1563.0,1457.5 1566.0,1461.3 1569.0,1464.5 1572.0,1454.7 1575.0,1457.3 1578.0,1455.4 1581.0,1450.8 1584.0,1463.6 1587.0,1448.0 1590.0,1473.1 1593.0,1455.6 1596.0,1461.8 1599.0,1454.3 1602.0,1445.7 1605.0,1457.1 1608.0,1445.9 1611.0,1449.4 1614.0,1449.6 1617.0,1448.3 1620.0,1448.5 1623.0,1445.9 1626.0,1450.0 1629.0,1440.4 1632.0,1452.8 1635.0,1444.3 1638.0,1456.2 1641.0,1452.0 1644.0,1438.1 1647.0,1453.7 1650.0,1448.2 1653.0,1444.9 1656.0,1472.4 1659.0,1464.9 1662.0,1461.5 1665.0,1470.6 1668.0,1467.9 1671.0,1468.8 1674.0,1462.6 1677.0,1473.2 1680.0,1433.8 1683.0,1425.6 1686.0,1431.6 1689.0,1433.0 1692.0,1429.8 1695.0,1440.5 1698.0,1429.2 1701.0,1427.3 1704.0,1430.8 1707.0,1433.4 1710.0,1441.8 1713.0,1426.4 1716.0,1432.9 1719.0,1433.9 1722.0,1430.8 1725.0,1441.7 1728.0,1425.0 1731.0,1436.2 1734.0,1431.1 1737.0,1434.3 1740.0,1425.8 1743.0,1441.9 1746.0,1427.8 1749.0,1432.4 1752.0,1423.0 1755.0,1430.9 1758.0,1435.9 1761.0,1435.0 1764.0,1470.0 1767.0,1449.5 1770.0,1447.2 1773.0,1444.6 1776.0,1449.5 1779.0,1446.7 1782.0,1444.3 1785.0,1449.3 1788.0,1449.9 1791.0,1444.3 1794.0,1444.0 1797.0,1455.4 1800.0,1452.5 1803.0,1441.1 1806.0,1469.1 1809.0,1468.1 1812.0,1474.4 1815.0,1458.7 1818.0,1474.4 1821.0,1473.2 1824.0,1463.1 1827.0,1440.0 1830.0,1431.1 1833.0,1428.6 1836.0,1434.0 1839.0,1425.1 1842.0,1432.8 1845.0,1440.9 1848.0,1424.4 1851.0,1441.6 1854.0,1427.8 1857.0,1436.3 1860.0,1430.1 1863.0,1423.0 1866.0,1434.3 1869.0,1446.0 1872.0,1438.8 1875.0,1440.8 1878.0,1448.4 1881.0,1440.5 1884.0,1438.2 1887.0,1444.7 1890.0,1449.1 1893.0,1440.2 1896.0,1448.9 1899.0,1448.5 1902.0,1478.0 1905.0,1447.2 1908.0,1448.9 1911.0,1454.6 1914.0,1455.8 1917.0,1451.3 1920.0,1453.7 1923.0,1449.0 1926.0,1454.2 1929.0,1449.4 1932.0,1451.6 1935.0,1447.3 1938.0,1448.1 1941.0,1453.3 1944.0,1448.4 1947.0,1450.3 1950.0,1464.1 1953.0,1467.1 1956.0,1478.0 1959.0,1466.8 1962.0,1464.4 1965.0,1473.6 1968.0,1468.9 1971.0,1442.4 1974.0,1452.1 1977.0,1440.4 1980.0,1434.8 1983.0,1455.8 1986.0,1441.7 1989.0,1453.5 1992.0,1440.2 1995.0,1442.4 1998.0,1455.0 2001.0,1438.2 2004.0,1449.1 2007.0,1451.7 2010.0,1443.4 2013.0,1445.4 2016.0,1446.6 2019.0,1449.3 2022.0,1440.8 2025.0,1450.3 2028.0,1447.1 2031.0,1454.6 2034.0,1439.7 2037.0,1442.9 2040.0,1451.0 2043.0,1442.8 2046.0,1448.0 2049.0,1445.9 2052.0,1450.6 2055.0,1440.8 2058.0,1447.0 2061.0,1435.5 2064.0,1447.6 2067.0,1454.3 2070.0,1439.9 2073.0,1444.5 2076.0,1442.4 2079.0,1451.0 2082.0,1445.5 2085.0,1440.6 2088.0,1451.3 2091.0,1445.7 2094.0,1448.6 2097.0,1465.7 2100.0,1478.0 2103.0,1468.1 2106.0,1468.6 2109.0,1468.1 2112.0,1470.1 2115.0,1474.1 2118.0,1467.1 2121.0,1451.1 2124.0,1446.2 2127.0,1450.4 2130.0,1447.5 2133.0,1444.0 2136.0,1438.1 2139.0,1451.3 2142.0,1448.7 2145.0,1445.0 2148.0,1448.0 2151.0,1442.9 2154.0,1445.4 2157.0,1428.8 2160.0,1439.7 2163.0,1429.8 2166.0,1429.6 2169.0,1427.4 2172.0,1434.2 2175.0,1438.4 2178.0,1444.9 2181.0,1442.0 2184.0,1453.5 2187.0,1449.0 2190.0,1447.1 2193.0,1447.3 2196.0,1449.2 2199.0,1445.9 2202.0,1448.1 2205.0,1441.1 2208.0,1453.9 2211.0,1443.8 2214.0,1454.0 2217.0,1433.2 2220.0,1453.3 2223.0,1448.6 2226.0,1442.5 2229.0,1450.6 2232.0,1450.2 2235.0,1448.9 2238.0,1466.5 2241.0,1470.5 2244.0,1474.6 2247.0,1473.2 2250.0,1467.7 2253.0,1470.1 2256.0,1470.7 2259.0,1473.9 2262.0,1463.4 2265.0,1466.6 2268.0,1473.3 2271.0,1465.1 2274.0,1469.9 2277.0,1471.6 2280.0,1471.8 2283.0,1456.5 2286.0,1467.6 2289.0,1452.9 2292.0,1468.0 2295.0,1454.2 2298.0,1460.0 2301.0,1467.4 2304.0,1458.9 2307.0,1459.5 2310.0,1461.8 2313.0,1464.9 2316.0,1460.8 2319.0,1462.0 2322.0,1466.5 2325.0,1456.8 2328.0,1461.5 2331.0,1459.0 2334.0,1468.0 2337.0,1463.7 2340.0,1465.3 2343.0,1459.2 2346.0,1461.4 2349.0,1465.9 2352.0,1428.0 2355.0,1467.3 2358.0,1464.3 2361.0,1458.5 2364.0,1464.1 2367.0,1462.7 2370.0,1470.5 2373.0,1470.2 2376.0,1457.1 2379.0,1463.3 2382.0,1453.4 2385.0,1468.7 2388.0,1462.5 2391.0,1458.5 2394.0,1468.6 2397.0,1454.8 2400.0,1465.4 2403.0,1464.0 2406.0,1457.5 2409.0,1469.2 2412.0,1465.6 2415.0,1442.9 2418.0,1460.0 2421.0,1468.5 2424.0,1461.6 2427.0,1450.4 2430.0,1441.3 2433.0,1440.2 2436.0,1439.6 2439.0,1443.8 2442.0,1439.9 2445.0,1446.6 2448.0,1442.1 2451.0,1440.0 2454.0,1443.1 2457.0,1443.3 2460.0,1458.2 2463.0,1451.4 2466.0,1464.2 2469.0,1456.5 2472.0,1464.6 2475.0,1455.0 2478.0,1460.0 2481.0,1458.3 2484.0,1464.4 2487.0,1455.2 2490.0,1456.5 2493.0,1459.9 2496.0,1455.5 2499.0,1459.6 2502.0,1457.1 2505.0,1442.2 2508.0,1448.5 2511.0,1435.3 2514.0,1461.0 2517.0,1459.1 2520.0,1463.2 2523.0,1453.6 2526.0,1459.6 2529.0,1461.3 2532.0,1462.4 2535.0,1458.7 2538.0,1458.0 2541.0,1457.4 2544.0,1464.0 2547.0,1465.0 2550.0,1458.3 2553.0,1460.1 2556.0,1461.5 2559.0,1455.1 2562.0,1460.7 2565.0,1445.5 2568.0,1447.8 2571.0,1445.2 2574.0,1441.0 2577.0,1453.3 2580.0,1450.7 2583.0,1441.3 2586.0,1448.2 2589.0,1446.3 2592.0,1457.7 2595.0,1426.0 2598.0,1464.9 2601.0,1478.0 2604.0,1461.3 2607.0,1452.7 2610.0,1453.2 2613.0,1455.2" fill="none" stroke="#00689a" stroke-width="2.2" clip-path="url(#hc)"/><rect x="1386.6" y="1480.5" width="27.6" height="22.5" fill="#fff"/><line x1="1385.6" y1="1480" x2="1415.2" y2="1480" stroke="#111" stroke-width="2"/><rect x="1386.3" y="1434.3" width="7.4" height="35.3" rx="1.5" fill="#222"/><rect x="1407.3" y="1434.3" width="7.8" height="35.3" rx="1.5" fill="#222"/><rect x="1396.8" y="1486.3" width="3.8" height="11.4" fill="#999"/><rect x="1403" y="1486.3" width="3.6" height="11.4" fill="#999"/><line x1="1795.0" y1="1450.0" x2="1801.0" y2="1450.0" stroke="#333" stroke-opacity="0.25" stroke-width="2.5" stroke-linecap="round"/><line x1="1793.5" y1="1453.5" x2="1797.8" y2="1457.8" stroke="#333" stroke-opacity="0.36" stroke-width="2.5" stroke-linecap="round"/><line x1="1790.0" y1="1455.0" x2="1790.0" y2="1461.0" stroke="#333" stroke-opacity="0.46" stroke-width="2.5" stroke-linecap="round"/><line x1="1786.5" y1="1453.5" x2="1782.2" y2="1457.8" stroke="#333" stroke-opacity="0.57" stroke-width="2.5" stroke-linecap="round"/><line x1="1785.0" y1="1450.0" x2="1779.0" y2="1450.0" stroke="#333" stroke-opacity="0.68" stroke-width="2.5" stroke-linecap="round"/><line x1="1786.5" y1="1446.5" x2="1782.2" y2="1442.2" stroke="#333" stroke-opacity="0.79" stroke-width="2.5" stroke-linecap="round"/><line x1="1790.0" y1="1445.0" x2="1790.0" y2="1439.0" stroke="#333" stroke-opacity="0.89" stroke-width="2.5" stroke-linecap="round"/><line x1="1793.5" y1="1446.5" x2="1797.8" y2="1442.2" stroke="#333" stroke-opacity="1.00" stroke-width="2.5" stroke-linecap="round"/><line x1="971" y1="1507.6" x2="2614" y2="1507.6" stroke="#15171a" stroke-width="2.2"/><line x1="972" y1="1507" x2="972" y2="1515" stroke="#15171a" stroke-width="2.2"/><line x1="1066" y1="1507" x2="1066" y2="1515" stroke="#15171a" stroke-width="2.2"/><line x1="1213.5" y1="1507" x2="1213.5" y2="1515" stroke="#15171a" stroke-width="2.2"/><line x1="1360.7" y1="1507" x2="1360.7" y2="1515" stroke="#15171a" stroke-width="2.2"/><line x1="1507.7" y1="1507" x2="1507.7" y2="1515" stroke="#15171a" stroke-width="2.2"/><line x1="1654.8" y1="1507" x2="1654.8" y2="1515" stroke="#15171a" stroke-width="2.2"/><line x1="1801.8" y1="1507" x2="1801.8" y2="1515" stroke="#15171a" stroke-width="2.2"/><line x1="1948.8" y1="1507" x2="1948.8" y2="1515" stroke="#15171a" stroke-width="2.2"/><line x1="2095.8" y1="1507" x2="2095.8" y2="1515" stroke="#15171a" stroke-width="2.2"/><line x1="2242.8" y1="1507" x2="2242.8" y2="1515" stroke="#15171a" stroke-width="2.2"/><line x1="2390" y1="1507" x2="2390" y2="1515" stroke="#15171a" stroke-width="2.2"/><line x1="2536.6" y1="1507" x2="2536.6" y2="1515" stroke="#15171a" stroke-width="2.2"/><line x1="2613" y1="1507" x2="2613" y2="1515" stroke="#15171a" stroke-width="2.2"/></svg><div style="position:absolute;left:566px;width:1000px;text-align:center;top:1519.1px;font-size:20px;line-height:20px;color:#212529;font-weight:400;white-space:nowrap;">7 Apr</div><div style="position:absolute;left:713.5px;width:1000px;text-align:center;top:1519.1px;font-size:20px;line-height:20px;color:#212529;font-weight:400;white-space:nowrap;">14 Apr</div><div style="position:absolute;left:860.7px;width:1000px;text-align:center;top:1519.1px;font-size:20px;line-height:20px;color:#212529;font-weight:400;white-space:nowrap;">21 Apr</div><div style="position:absolute;left:1007.7px;width:1000px;text-align:center;top:1519.1px;font-size:20px;line-height:20px;color:#212529;font-weight:400;white-space:nowrap;">28 Apr</div><div style="position:absolute;left:1154.8px;width:1000px;text-align:center;top:1519.1px;font-size:20px;line-height:20px;color:#212529;font-weight:400;white-space:nowrap;">5 May</div><div style="position:absolute;left:1301.8px;width:1000px;text-align:center;top:1519.1px;font-size:20px;line-height:20px;color:#212529;font-weight:400;white-space:nowrap;">12 May</div><div style="position:absolute;left:1448.8px;width:1000px;text-align:center;top:1519.1px;font-size:20px;line-height:20px;color:#212529;font-weight:400;white-space:nowrap;">19 May</div><div style="position:absolute;left:1595.8000000000002px;width:1000px;text-align:center;top:1519.1px;font-size:20px;line-height:20px;color:#212529;font-weight:400;white-space:nowrap;">26 May</div><div style="position:absolute;left:1742.8000000000002px;width:1000px;text-align:center;top:1519.1px;font-size:20px;line-height:20px;color:#212529;font-weight:400;white-space:nowrap;">2 Jun</div><div style="position:absolute;left:1890px;width:1000px;text-align:center;top:1519.1px;font-size:20px;line-height:20px;color:#212529;font-weight:400;white-space:nowrap;">9 Jun</div><div style="position:absolute;left:2036.6px;width:1000px;text-align:center;top:1519.1px;font-size:20px;line-height:20px;color:#212529;font-weight:400;white-space:nowrap;">16 Jun</div><div style="position:absolute;left:972px;top:1557px;width:489px;height:46px;background:#fff;border:2px solid #e0e0e0;border-radius:6px;box-sizing:border-box;"></div><div style="position:absolute;left:505.5px;width:1000px;text-align:center;top:1569.6px;font-size:23.5px;line-height:23.5px;color:#212529;font-weight:400;white-space:nowrap;">1D</div><div style="position:absolute;left:1038px;top:1558px;width:2px;height:44px;background:#e0e0e0;"></div><div style="position:absolute;left:575.0px;width:1000px;text-align:center;top:1569.6px;font-size:23.5px;line-height:23.5px;color:#212529;font-weight:400;white-space:nowrap;">1W</div><div style="position:absolute;left:1110px;top:1558px;width:2px;height:44px;background:#e0e0e0;"></div><div style="position:absolute;left:647.0px;width:1000px;text-align:center;top:1569.6px;font-size:23.5px;line-height:23.5px;color:#212529;font-weight:400;white-space:nowrap;">1M</div><div style="position:absolute;left:1182px;top:1558px;width:2px;height:44px;background:#e0e0e0;"></div><div style="position:absolute;left:718.0px;width:1000px;text-align:center;top:1569.6px;font-size:23.5px;line-height:23.5px;color:#212529;font-weight:400;white-space:nowrap;">3M</div><div style="position:absolute;left:1252px;top:1558px;width:2px;height:44px;background:#e0e0e0;"></div><div style="position:absolute;left:788.0px;width:1000px;text-align:center;top:1569.6px;font-size:23.5px;line-height:23.5px;color:#212529;font-weight:400;white-space:nowrap;">6M</div><div style="position:absolute;left:1322px;top:1558px;width:2px;height:44px;background:#e0e0e0;"></div><div style="position:absolute;left:854.0px;width:1000px;text-align:center;top:1569.6px;font-size:23.5px;line-height:23.5px;color:#212529;font-weight:400;white-space:nowrap;">1Y</div><div style="position:absolute;left:1384px;top:1558px;width:2px;height:44px;background:#e0e0e0;"></div><div style="position:absolute;left:923.0px;width:1000px;text-align:center;top:1569.6px;font-size:23.5px;line-height:23.5px;color:#212529;font-weight:400;white-space:nowrap;">ALL</div><div style="position:absolute;left:1495px;top:1557px;width:204px;height:46px;background:#fff;border:2px solid #e0e0e0;border-radius:6px;box-sizing:border-box;"></div><div style="position:absolute;left:1497px;top:1559px;width:155px;height:42px;background:#eff4fa;border-radius:4px 0 0 4px;"></div><div style="position:absolute;left:1652px;top:1558px;width:2px;height:44px;background:#e0e0e0;"></div><div style="position:absolute;left:1512px;top:1569.9px;font-size:23.2px;line-height:23.2px;color:#0a5ec0;font-weight:400;white-space:nowrap;">CUSTOM</div><svg style="position:absolute;left:1619px;top:1572px;" width="24" height="18" viewBox="1619 1572 24 18"><polygon points="1623,1585 1639.5,1585 1631.2,1576" fill="#9a9a9a"/></svg><svg style="position:absolute;left:1660px;top:1568px;" width="34" height="30" viewBox="1660 1568 34 30"><rect x="1666" y="1573" width="21" height="18" rx="1.5" fill="none" stroke="#444" stroke-width="2"/><g fill="#444"><polygon points="1677,1575.8 1679.2,1578.2 1674.8,1578.2"/><polygon points="1677,1588.2 1679.2,1585.8 1674.8,1585.8"/><polygon points="1669.5,1582 1671.9,1579.8 1671.9,1584.2"/><polygon points="1684.5,1582 1682.1,1579.8 1682.1,1584.2"/></g></svg>
</body></html>
